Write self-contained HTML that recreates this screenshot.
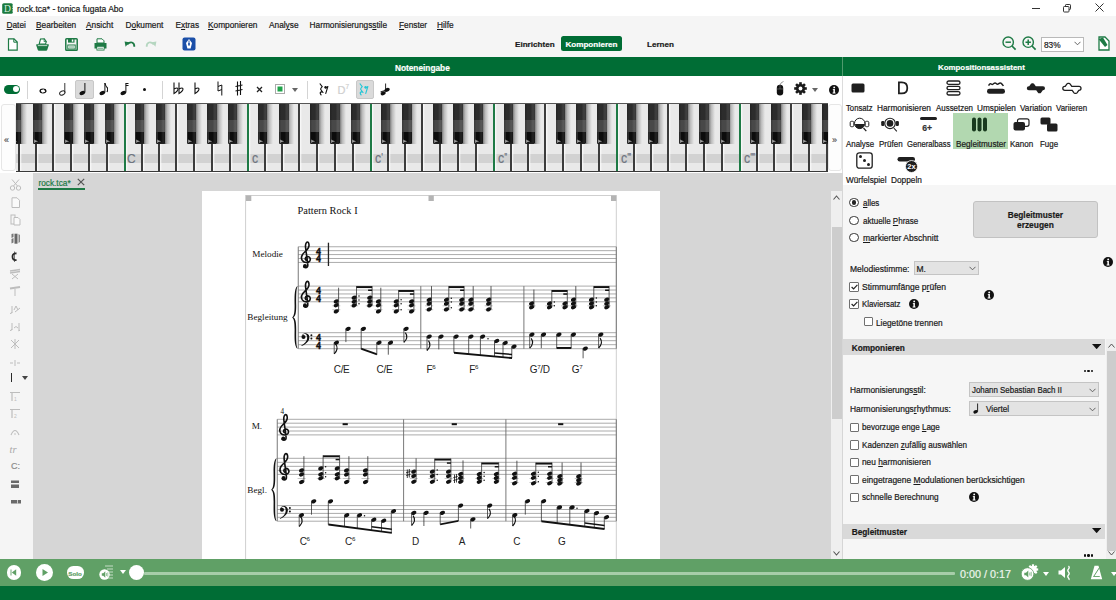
<!DOCTYPE html><html><head><meta charset="utf-8"><style>html,body{margin:0;padding:0}body{width:1116px;height:600px;position:relative;overflow:hidden;background:#fff;font-family:"Liberation Sans",sans-serif}.t{position:absolute;white-space:nowrap;-webkit-text-stroke:0.2px currentColor}u{text-decoration:underline;text-underline-offset:1px;text-decoration-thickness:0.5px}</style></head><body><div style="position:absolute;left:0px;top:0px;width:1116px;height:16px;background:#fff"></div>
<div style="position:absolute;left:0px;top:16px;width:1116px;height:41px;background:#f5f5f5"></div>
<div style="position:absolute;left:0px;top:57px;width:1116px;height:19px;background:#006d35"></div>
<div style="position:absolute;left:842px;top:57px;width:1px;height:19px;background:#4f9a6d"></div>
<div style="position:absolute;left:0px;top:76px;width:842px;height:27px;background:#fff"></div>
<div style="position:absolute;left:842px;top:76px;width:1px;height:483px;background:#dcdcdc"></div>
<div style="position:absolute;left:843px;top:76px;width:273px;height:109px;background:#fff"></div>
<div style="position:absolute;left:843px;top:185px;width:273px;height:374px;background:#f6f6f6"></div>
<div style="position:absolute;left:0px;top:103px;width:842px;height:70px;background:#fff"></div>
<div style="position:absolute;left:0px;top:173px;width:33px;height:386px;background:#f5f5f5"></div>
<div style="position:absolute;left:33px;top:173px;width:798px;height:386px;background:#d6d6d6"></div>
<div style="position:absolute;left:831px;top:173px;width:12px;height:386px;background:#d6d6d6"></div>
<div style="position:absolute;left:0px;top:559px;width:1116px;height:27px;background:#60a066"></div>
<div style="position:absolute;left:0px;top:586px;width:1116px;height:14px;background:#006d35"></div>
<svg style="position:absolute;left:2px;top:2.5px" width="11" height="11" viewBox="0 0 11 11"><rect x="0.2" y="0.2" width="10.6" height="10.6" rx="1.6" fill="#1b7a3e"/><text x="2" y="9" font-family="Liberation Serif" font-size="9.5" fill="#d8eedc">D</text><path d="M10.8 2.5 v1 M10.8 5 v1 M10.8 7.5 v1" stroke="#fff" stroke-width="0.8"/></svg>
<div class="t" style="left:17px;top:5.00px;font-size:8.5px;line-height:8.5px;height:11.05px;color:#1a1a1a;font-weight:400;font-family:"Liberation Sans", sans-serif;">rock.tca* - tonica fugata Abo</div>
<div style="position:absolute;left:1032px;top:8px;width:8px;height:1px;background:#333"></div>
<svg style="position:absolute;left:1062px;top:3px" width="10" height="10" viewBox="0 0 10 10" fill="none" stroke="#333" stroke-width="1">
<rect x="1.5" y="3.5" width="5.5" height="5.5" rx="0.8"/><path d="M3.5 3.5 V2.2 Q3.5 1.5 4.2 1.5 H7.8 Q8.5 1.5 8.5 2.2 V5.8 Q8.5 6.5 7.8 6.5 H7"/></svg>
<svg style="position:absolute;left:1095px;top:3px" width="9" height="9" viewBox="0 0 9 9" stroke="#333" stroke-width="1"><path d="M0.5 0.5 L8.5 8.5 M8.5 0.5 L0.5 8.5"/></svg>
<div class="t" style="left:6.5px;top:20.87px;font-size:8.3px;line-height:8.3px;height:10.790000000000001px;color:#1a1a1a;font-weight:400;font-family:"Liberation Sans", sans-serif;"><u>D</u>atei</div>
<div class="t" style="left:36px;top:20.87px;font-size:8.3px;line-height:8.3px;height:10.790000000000001px;color:#1a1a1a;font-weight:400;font-family:"Liberation Sans", sans-serif;"><u>B</u>earbeiten</div>
<div class="t" style="left:86px;top:20.87px;font-size:8.3px;line-height:8.3px;height:10.790000000000001px;color:#1a1a1a;font-weight:400;font-family:"Liberation Sans", sans-serif;"><u>A</u>nsicht</div>
<div class="t" style="left:125.5px;top:20.87px;font-size:8.3px;line-height:8.3px;height:10.790000000000001px;color:#1a1a1a;font-weight:400;font-family:"Liberation Sans", sans-serif;">D<u>o</u>kument</div>
<div class="t" style="left:175.5px;top:20.87px;font-size:8.3px;line-height:8.3px;height:10.790000000000001px;color:#1a1a1a;font-weight:400;font-family:"Liberation Sans", sans-serif;">E<u>x</u>tras</div>
<div class="t" style="left:208px;top:20.87px;font-size:8.3px;line-height:8.3px;height:10.790000000000001px;color:#1a1a1a;font-weight:400;font-family:"Liberation Sans", sans-serif;"><u>K</u>omponieren</div>
<div class="t" style="left:269px;top:20.87px;font-size:8.3px;line-height:8.3px;height:10.790000000000001px;color:#1a1a1a;font-weight:400;font-family:"Liberation Sans", sans-serif;">Anal<u>y</u>se</div>
<div class="t" style="left:309.6px;top:20.87px;font-size:8.3px;line-height:8.3px;height:10.790000000000001px;color:#1a1a1a;font-weight:400;font-family:"Liberation Sans", sans-serif;">Harmonisierungs<u>s</u>tile</div>
<div class="t" style="left:399px;top:20.87px;font-size:8.3px;line-height:8.3px;height:10.790000000000001px;color:#1a1a1a;font-weight:400;font-family:"Liberation Sans", sans-serif;"><u>F</u>enster</div>
<div class="t" style="left:437px;top:20.87px;font-size:8.3px;line-height:8.3px;height:10.790000000000001px;color:#1a1a1a;font-weight:400;font-family:"Liberation Sans", sans-serif;"><u>H</u>ilfe</div>
<svg style="position:absolute;left:7px;top:38px" width="13" height="13" viewBox="0 0 13 13"><path d="M1.5 0.8 H7 L10.2 4 V12.2 H1.5 Z" fill="#fff" stroke="#1e7a45" stroke-width="1.2"/><path d="M6.8 0.8 V4.2 H10.2" fill="none" stroke="#1e7a45" stroke-width="1"/></svg>
<svg style="position:absolute;left:36px;top:37.5px" width="13" height="13" viewBox="0 0 13 13"><path d="M3.2 6 L4.5 1 L8.3 0.8 L10.3 3.5 L9.6 6 Z" fill="#fff" stroke="#1e7a45" stroke-width="1.1"/><path d="M8.3 0.8 L8 3.6 L10.3 3.5" fill="none" stroke="#1e7a45" stroke-width="0.8"/><path d="M0.3 6.2 H12.7 V7.6 L11.2 12 Q10.9 12.7 10.2 12.7 H2.8 Q2.1 12.7 1.8 12 L0.3 7.6 Z" fill="#1e7a45"/><path d="M1.8 7.6 H11.2" stroke="#fff" stroke-width="0.7"/></svg>
<svg style="position:absolute;left:65px;top:38px" width="13" height="13" viewBox="0 0 13 13"><rect x="0.8" y="0.8" width="11.4" height="11.4" rx="0.8" fill="none" stroke="#1e7a45" stroke-width="1.5"/><rect x="3" y="0.8" width="6.5" height="3.8" fill="#1e7a45"/><rect x="6.8" y="1.5" width="1.5" height="2.2" fill="#fff"/><rect x="2.8" y="7" width="7.4" height="4" fill="#fff" stroke="#1e7a45" stroke-width="1"/><path d="M4 9 H9" stroke="#1e7a45" stroke-width="0.7"/></svg>
<svg style="position:absolute;left:94px;top:38px" width="13" height="13" viewBox="0 0 13 13"><path d="M3 0.8 H8 L10 2.8 V5 H3 Z" fill="#fff" stroke="#1e7a45" stroke-width="1"/><path d="M0.5 5 H12.5 V10.5 H10.5 V12.4 H2.5 V10.5 H0.5 Z" fill="#1e7a45"/><rect x="3.3" y="8.8" width="6.4" height="2.8" fill="#fff"/><rect x="4" y="9.8" width="5" height="0.7" fill="#1e7a45"/></svg>
<svg style="position:absolute;left:124px;top:40px" width="12" height="9" viewBox="0 0 12 9"><path d="M3.2 4.5 Q5.5 1.8 8 2.5 Q10.5 3.3 10.3 6.8" fill="none" stroke="#1e7a45" stroke-width="1.8"/><path d="M0.6 1.5 L5.2 2.2 L1.6 6.8 Z" fill="#1e7a45"/></svg>
<svg style="position:absolute;left:145px;top:40px" width="12" height="9" viewBox="0 0 12 9"><path d="M8.8 4.5 Q6.5 1.8 4 2.5 Q1.5 3.3 1.7 6.8" fill="none" stroke="#b5d6c0" stroke-width="1.8"/><path d="M11.4 1.5 L6.8 2.2 L10.4 6.8 Z" fill="#b5d6c0"/></svg>
<svg style="position:absolute;left:182px;top:37px" width="14" height="14" viewBox="0 0 14 14"><rect x="0.5" y="0.5" width="13" height="13" rx="2" fill="#1b4fa8"/><path d="M7 2 L10 6 L8.6 11.5 H5.4 L4 6 Z" fill="#fff"/><path d="M7 3.5 V9" stroke="#1b4fa8" stroke-width="0.9"/><circle cx="7" cy="7" r="1" fill="#1b4fa8"/></svg>
<div class="t" style="left:515px;top:41.04px;font-size:8.1px;line-height:8.1px;height:10.53px;color:#1a1a1a;font-weight:700;font-family:"Liberation Sans", sans-serif;">Einrichten</div>
<div style="position:absolute;left:561.3px;top:36.3px;width:61px;height:14.3px;background:#006d35;border-radius:2.5px"></div>
<div class="t" style="left:565.4px;top:41.04px;font-size:8.1px;line-height:8.1px;height:10.53px;color:#fff;font-weight:700;font-family:"Liberation Sans", sans-serif;">Komponieren</div>
<div class="t" style="left:647px;top:41.04px;font-size:8.1px;line-height:8.1px;height:10.53px;color:#1a1a1a;font-weight:700;font-family:"Liberation Sans", sans-serif;">Lernen</div>
<svg style="position:absolute;left:1002px;top:36px" width="15" height="15" viewBox="0 0 15 15"><circle cx="6.2" cy="6.2" r="5.2" fill="none" stroke="#1e7a45" stroke-width="1.4"/><path d="M3.5 6.2 H8.9" stroke="#1e7a45" stroke-width="1.5"/><path d="M10 10 L13.6 13.6" stroke="#1e7a45" stroke-width="1.7"/></svg>
<svg style="position:absolute;left:1022px;top:36px" width="15" height="15" viewBox="0 0 15 15"><circle cx="6.2" cy="6.2" r="5.2" fill="none" stroke="#1e7a45" stroke-width="1.4"/><path d="M3.5 6.2 H8.9 M6.2 3.5 V8.9" stroke="#1e7a45" stroke-width="1.5"/><path d="M10 10 L13.6 13.6" stroke="#1e7a45" stroke-width="1.7"/></svg>
<div style="position:absolute;left:1040.8px;top:36.7px;width:41.5px;height:13.5px;background:#fff;border:1px solid #b9b9b9"></div>
<div class="t" style="left:1044px;top:40.87px;font-size:8.3px;line-height:8.3px;height:10.790000000000001px;color:#222;font-weight:400;font-family:"Liberation Sans", sans-serif;">83%</div>
<svg style="position:absolute;left:1074px;top:41px" width="7" height="5" viewBox="0 0 7 5"><path d="M0.5 0.8 L3.5 3.8 L6.5 0.8" fill="none" stroke="#555" stroke-width="0.9"/></svg>
<svg style="position:absolute;left:1097px;top:36px" width="13" height="15" viewBox="0 0 13 15"><path d="M2 1 H8 L12 5 V14 H2 Z" fill="#fff" stroke="#1e7a45" stroke-width="1.3"/><path d="M1.5 3 L6 1.5 L10.5 9 L8 11 Z" fill="#1e7a45"/></svg>
<div class="t" style="left:394.9px;top:63.87px;font-size:8.3px;line-height:8.3px;height:10.790000000000001px;color:#fff;font-weight:700;font-family:"Liberation Sans", sans-serif;">Noteneingabe</div>
<div class="t" style="left:938px;top:64.21px;font-size:7.9px;line-height:7.9px;height:10.270000000000001px;color:#fff;font-weight:700;font-family:"Liberation Sans", sans-serif;">Kompositionsassistent</div>
<div style="position:absolute;left:16px;top:103px;width:812px;height:69px;overflow:hidden;background:#e9e9e9">
<div style="position:absolute;left:0;top:51px;width:812px;height:9px;background:#d2d2d2"></div>
<div style="position:absolute;left:-13.34px;top:0;width:2.2px;height:69px;background:linear-gradient(90deg,#fcfcfc,rgba(250,250,250,0))"></div><div style="position:absolute;left:-15.34px;top:0px;width:1.9px;height:69px;background:#1e7a45;border-radius:0 0 1px 1px"></div><div style="position:absolute;left:3.96px;top:0;width:2.2px;height:69px;background:linear-gradient(90deg,#fcfcfc,rgba(250,250,250,0))"></div><div style="position:absolute;left:1.96px;top:41px;width:1.9px;height:28px;background:#3c3c3c;border-radius:0 0 1px 1px"></div><div style="position:absolute;left:21.06px;top:0;width:2.2px;height:69px;background:linear-gradient(90deg,#fcfcfc,rgba(250,250,250,0))"></div><div style="position:absolute;left:19.06px;top:41px;width:1.9px;height:28px;background:#3c3c3c;border-radius:0 0 1px 1px"></div><div style="position:absolute;left:37.96px;top:0;width:2.2px;height:69px;background:linear-gradient(90deg,#fcfcfc,rgba(250,250,250,0))"></div><div style="position:absolute;left:35.96px;top:0px;width:1.9px;height:69px;background:#3c3c3c;border-radius:0 0 1px 1px"></div><div style="position:absolute;left:55.76px;top:0;width:2.2px;height:69px;background:linear-gradient(90deg,#fcfcfc,rgba(250,250,250,0))"></div><div style="position:absolute;left:53.76px;top:41px;width:1.9px;height:28px;background:#3c3c3c;border-radius:0 0 1px 1px"></div><div style="position:absolute;left:73.96px;top:0;width:2.2px;height:69px;background:linear-gradient(90deg,#fcfcfc,rgba(250,250,250,0))"></div><div style="position:absolute;left:71.96px;top:41px;width:1.9px;height:28px;background:#3c3c3c;border-radius:0 0 1px 1px"></div><div style="position:absolute;left:91.66px;top:0;width:2.2px;height:69px;background:linear-gradient(90deg,#fcfcfc,rgba(250,250,250,0))"></div><div style="position:absolute;left:89.66px;top:41px;width:1.9px;height:28px;background:#3c3c3c;border-radius:0 0 1px 1px"></div><div style="position:absolute;left:109.70px;top:0;width:2.2px;height:69px;background:linear-gradient(90deg,#fcfcfc,rgba(250,250,250,0))"></div><div style="position:absolute;left:107.70px;top:0px;width:1.9px;height:69px;background:#1e7a45;border-radius:0 0 1px 1px"></div><div style="position:absolute;left:127.00px;top:0;width:2.2px;height:69px;background:linear-gradient(90deg,#fcfcfc,rgba(250,250,250,0))"></div><div style="position:absolute;left:125.00px;top:41px;width:1.9px;height:28px;background:#3c3c3c;border-radius:0 0 1px 1px"></div><div style="position:absolute;left:144.10px;top:0;width:2.2px;height:69px;background:linear-gradient(90deg,#fcfcfc,rgba(250,250,250,0))"></div><div style="position:absolute;left:142.10px;top:41px;width:1.9px;height:28px;background:#3c3c3c;border-radius:0 0 1px 1px"></div><div style="position:absolute;left:161.00px;top:0;width:2.2px;height:69px;background:linear-gradient(90deg,#fcfcfc,rgba(250,250,250,0))"></div><div style="position:absolute;left:159.00px;top:0px;width:1.9px;height:69px;background:#3c3c3c;border-radius:0 0 1px 1px"></div><div style="position:absolute;left:178.80px;top:0;width:2.2px;height:69px;background:linear-gradient(90deg,#fcfcfc,rgba(250,250,250,0))"></div><div style="position:absolute;left:176.80px;top:41px;width:1.9px;height:28px;background:#3c3c3c;border-radius:0 0 1px 1px"></div><div style="position:absolute;left:197.00px;top:0;width:2.2px;height:69px;background:linear-gradient(90deg,#fcfcfc,rgba(250,250,250,0))"></div><div style="position:absolute;left:195.00px;top:41px;width:1.9px;height:28px;background:#3c3c3c;border-radius:0 0 1px 1px"></div><div style="position:absolute;left:214.70px;top:0;width:2.2px;height:69px;background:linear-gradient(90deg,#fcfcfc,rgba(250,250,250,0))"></div><div style="position:absolute;left:212.70px;top:41px;width:1.9px;height:28px;background:#3c3c3c;border-radius:0 0 1px 1px"></div><div style="position:absolute;left:232.74px;top:0;width:2.2px;height:69px;background:linear-gradient(90deg,#fcfcfc,rgba(250,250,250,0))"></div><div style="position:absolute;left:230.74px;top:0px;width:1.9px;height:69px;background:#1e7a45;border-radius:0 0 1px 1px"></div><div style="position:absolute;left:250.04px;top:0;width:2.2px;height:69px;background:linear-gradient(90deg,#fcfcfc,rgba(250,250,250,0))"></div><div style="position:absolute;left:248.04px;top:41px;width:1.9px;height:28px;background:#3c3c3c;border-radius:0 0 1px 1px"></div><div style="position:absolute;left:267.14px;top:0;width:2.2px;height:69px;background:linear-gradient(90deg,#fcfcfc,rgba(250,250,250,0))"></div><div style="position:absolute;left:265.14px;top:41px;width:1.9px;height:28px;background:#3c3c3c;border-radius:0 0 1px 1px"></div><div style="position:absolute;left:284.04px;top:0;width:2.2px;height:69px;background:linear-gradient(90deg,#fcfcfc,rgba(250,250,250,0))"></div><div style="position:absolute;left:282.04px;top:0px;width:1.9px;height:69px;background:#3c3c3c;border-radius:0 0 1px 1px"></div><div style="position:absolute;left:301.84px;top:0;width:2.2px;height:69px;background:linear-gradient(90deg,#fcfcfc,rgba(250,250,250,0))"></div><div style="position:absolute;left:299.84px;top:41px;width:1.9px;height:28px;background:#3c3c3c;border-radius:0 0 1px 1px"></div><div style="position:absolute;left:320.04px;top:0;width:2.2px;height:69px;background:linear-gradient(90deg,#fcfcfc,rgba(250,250,250,0))"></div><div style="position:absolute;left:318.04px;top:41px;width:1.9px;height:28px;background:#3c3c3c;border-radius:0 0 1px 1px"></div><div style="position:absolute;left:337.74px;top:0;width:2.2px;height:69px;background:linear-gradient(90deg,#fcfcfc,rgba(250,250,250,0))"></div><div style="position:absolute;left:335.74px;top:41px;width:1.9px;height:28px;background:#3c3c3c;border-radius:0 0 1px 1px"></div><div style="position:absolute;left:355.78px;top:0;width:2.2px;height:69px;background:linear-gradient(90deg,#fcfcfc,rgba(250,250,250,0))"></div><div style="position:absolute;left:353.78px;top:0px;width:1.9px;height:69px;background:#1e7a45;border-radius:0 0 1px 1px"></div><div style="position:absolute;left:373.08px;top:0;width:2.2px;height:69px;background:linear-gradient(90deg,#fcfcfc,rgba(250,250,250,0))"></div><div style="position:absolute;left:371.08px;top:41px;width:1.9px;height:28px;background:#3c3c3c;border-radius:0 0 1px 1px"></div><div style="position:absolute;left:390.18px;top:0;width:2.2px;height:69px;background:linear-gradient(90deg,#fcfcfc,rgba(250,250,250,0))"></div><div style="position:absolute;left:388.18px;top:41px;width:1.9px;height:28px;background:#3c3c3c;border-radius:0 0 1px 1px"></div><div style="position:absolute;left:407.08px;top:0;width:2.2px;height:69px;background:linear-gradient(90deg,#fcfcfc,rgba(250,250,250,0))"></div><div style="position:absolute;left:405.08px;top:0px;width:1.9px;height:69px;background:#3c3c3c;border-radius:0 0 1px 1px"></div><div style="position:absolute;left:424.88px;top:0;width:2.2px;height:69px;background:linear-gradient(90deg,#fcfcfc,rgba(250,250,250,0))"></div><div style="position:absolute;left:422.88px;top:41px;width:1.9px;height:28px;background:#3c3c3c;border-radius:0 0 1px 1px"></div><div style="position:absolute;left:443.08px;top:0;width:2.2px;height:69px;background:linear-gradient(90deg,#fcfcfc,rgba(250,250,250,0))"></div><div style="position:absolute;left:441.08px;top:41px;width:1.9px;height:28px;background:#3c3c3c;border-radius:0 0 1px 1px"></div><div style="position:absolute;left:460.78px;top:0;width:2.2px;height:69px;background:linear-gradient(90deg,#fcfcfc,rgba(250,250,250,0))"></div><div style="position:absolute;left:458.78px;top:41px;width:1.9px;height:28px;background:#3c3c3c;border-radius:0 0 1px 1px"></div><div style="position:absolute;left:478.82px;top:0;width:2.2px;height:69px;background:linear-gradient(90deg,#fcfcfc,rgba(250,250,250,0))"></div><div style="position:absolute;left:476.82px;top:0px;width:1.9px;height:69px;background:#1e7a45;border-radius:0 0 1px 1px"></div><div style="position:absolute;left:496.12px;top:0;width:2.2px;height:69px;background:linear-gradient(90deg,#fcfcfc,rgba(250,250,250,0))"></div><div style="position:absolute;left:494.12px;top:41px;width:1.9px;height:28px;background:#3c3c3c;border-radius:0 0 1px 1px"></div><div style="position:absolute;left:513.22px;top:0;width:2.2px;height:69px;background:linear-gradient(90deg,#fcfcfc,rgba(250,250,250,0))"></div><div style="position:absolute;left:511.22px;top:41px;width:1.9px;height:28px;background:#3c3c3c;border-radius:0 0 1px 1px"></div><div style="position:absolute;left:530.12px;top:0;width:2.2px;height:69px;background:linear-gradient(90deg,#fcfcfc,rgba(250,250,250,0))"></div><div style="position:absolute;left:528.12px;top:0px;width:1.9px;height:69px;background:#3c3c3c;border-radius:0 0 1px 1px"></div><div style="position:absolute;left:547.92px;top:0;width:2.2px;height:69px;background:linear-gradient(90deg,#fcfcfc,rgba(250,250,250,0))"></div><div style="position:absolute;left:545.92px;top:41px;width:1.9px;height:28px;background:#3c3c3c;border-radius:0 0 1px 1px"></div><div style="position:absolute;left:566.12px;top:0;width:2.2px;height:69px;background:linear-gradient(90deg,#fcfcfc,rgba(250,250,250,0))"></div><div style="position:absolute;left:564.12px;top:41px;width:1.9px;height:28px;background:#3c3c3c;border-radius:0 0 1px 1px"></div><div style="position:absolute;left:583.82px;top:0;width:2.2px;height:69px;background:linear-gradient(90deg,#fcfcfc,rgba(250,250,250,0))"></div><div style="position:absolute;left:581.82px;top:41px;width:1.9px;height:28px;background:#3c3c3c;border-radius:0 0 1px 1px"></div><div style="position:absolute;left:601.86px;top:0;width:2.2px;height:69px;background:linear-gradient(90deg,#fcfcfc,rgba(250,250,250,0))"></div><div style="position:absolute;left:599.86px;top:0px;width:1.9px;height:69px;background:#1e7a45;border-radius:0 0 1px 1px"></div><div style="position:absolute;left:619.16px;top:0;width:2.2px;height:69px;background:linear-gradient(90deg,#fcfcfc,rgba(250,250,250,0))"></div><div style="position:absolute;left:617.16px;top:41px;width:1.9px;height:28px;background:#3c3c3c;border-radius:0 0 1px 1px"></div><div style="position:absolute;left:636.26px;top:0;width:2.2px;height:69px;background:linear-gradient(90deg,#fcfcfc,rgba(250,250,250,0))"></div><div style="position:absolute;left:634.26px;top:41px;width:1.9px;height:28px;background:#3c3c3c;border-radius:0 0 1px 1px"></div><div style="position:absolute;left:653.16px;top:0;width:2.2px;height:69px;background:linear-gradient(90deg,#fcfcfc,rgba(250,250,250,0))"></div><div style="position:absolute;left:651.16px;top:0px;width:1.9px;height:69px;background:#3c3c3c;border-radius:0 0 1px 1px"></div><div style="position:absolute;left:670.96px;top:0;width:2.2px;height:69px;background:linear-gradient(90deg,#fcfcfc,rgba(250,250,250,0))"></div><div style="position:absolute;left:668.96px;top:41px;width:1.9px;height:28px;background:#3c3c3c;border-radius:0 0 1px 1px"></div><div style="position:absolute;left:689.16px;top:0;width:2.2px;height:69px;background:linear-gradient(90deg,#fcfcfc,rgba(250,250,250,0))"></div><div style="position:absolute;left:687.16px;top:41px;width:1.9px;height:28px;background:#3c3c3c;border-radius:0 0 1px 1px"></div><div style="position:absolute;left:706.86px;top:0;width:2.2px;height:69px;background:linear-gradient(90deg,#fcfcfc,rgba(250,250,250,0))"></div><div style="position:absolute;left:704.86px;top:41px;width:1.9px;height:28px;background:#3c3c3c;border-radius:0 0 1px 1px"></div><div style="position:absolute;left:724.90px;top:0;width:2.2px;height:69px;background:linear-gradient(90deg,#fcfcfc,rgba(250,250,250,0))"></div><div style="position:absolute;left:722.90px;top:0px;width:1.9px;height:69px;background:#1e7a45;border-radius:0 0 1px 1px"></div><div style="position:absolute;left:742.20px;top:0;width:2.2px;height:69px;background:linear-gradient(90deg,#fcfcfc,rgba(250,250,250,0))"></div><div style="position:absolute;left:740.20px;top:41px;width:1.9px;height:28px;background:#3c3c3c;border-radius:0 0 1px 1px"></div><div style="position:absolute;left:759.30px;top:0;width:2.2px;height:69px;background:linear-gradient(90deg,#fcfcfc,rgba(250,250,250,0))"></div><div style="position:absolute;left:757.30px;top:41px;width:1.9px;height:28px;background:#3c3c3c;border-radius:0 0 1px 1px"></div><div style="position:absolute;left:776.20px;top:0;width:2.2px;height:69px;background:linear-gradient(90deg,#fcfcfc,rgba(250,250,250,0))"></div><div style="position:absolute;left:774.20px;top:0px;width:1.9px;height:69px;background:#3c3c3c;border-radius:0 0 1px 1px"></div><div style="position:absolute;left:794.00px;top:0;width:2.2px;height:69px;background:linear-gradient(90deg,#fcfcfc,rgba(250,250,250,0))"></div><div style="position:absolute;left:792.00px;top:41px;width:1.9px;height:28px;background:#3c3c3c;border-radius:0 0 1px 1px"></div><div style="position:absolute;left:812.20px;top:0;width:2.2px;height:69px;background:linear-gradient(90deg,#fcfcfc,rgba(250,250,250,0))"></div><div style="position:absolute;left:810.20px;top:41px;width:1.9px;height:28px;background:#3c3c3c;border-radius:0 0 1px 1px"></div><div style="position:absolute;left:829.90px;top:0;width:2.2px;height:69px;background:linear-gradient(90deg,#fcfcfc,rgba(250,250,250,0))"></div><div style="position:absolute;left:827.90px;top:41px;width:1.9px;height:28px;background:#3c3c3c;border-radius:0 0 1px 1px"></div><div style="position:absolute;left:5.16px;top:0;width:6px;height:41px;background:linear-gradient(90deg,#7c7c7c,#b8b8b8 35%,rgba(233,233,233,0))"></div><div style="position:absolute;left:-4.34px;top:0;width:9.6px;height:41.3px;border-radius:0 0 1.5px 1.5px;background:linear-gradient(180deg,#2c2c2c 0,#2c2c2c 16.6px,#484848 16.6px,#484848 29.3px,#0c0c0c 29.3px)"></div><div style="position:absolute;left:-4.34px;top:0;width:9.6px;height:41.3px;border-radius:0 0 1.5px 1.5px;background:linear-gradient(90deg,rgba(0,0,0,0.2),rgba(0,0,0,0) 25%,rgba(255,255,255,0) 55%,rgba(255,255,255,0.1) 80%,rgba(255,255,255,0.04))"></div><div style="position:absolute;left:-4.14px;top:29.3px;width:1.6px;height:11px;background:rgba(255,255,255,0.13)"></div><svg style="position:absolute;left:-4.34px;top:35px" width="10" height="7" viewBox="0 0 10 7"><path d="M1.2 1.6 Q2.5 3 5.2 3.2 Q2.5 3.8 1.2 5 Z" fill="#c8c8c8" opacity="0.8"/><path d="M1.2 5.2 Q5 3.4 9.2 5.5 V6 H1.2 Z" fill="#222"/></svg><div style="position:absolute;left:26.36px;top:0;width:6px;height:41px;background:linear-gradient(90deg,#7c7c7c,#b8b8b8 35%,rgba(233,233,233,0))"></div><div style="position:absolute;left:16.86px;top:0;width:9.6px;height:41.3px;border-radius:0 0 1.5px 1.5px;background:linear-gradient(180deg,#2c2c2c 0,#2c2c2c 16.6px,#484848 16.6px,#484848 29.3px,#0c0c0c 29.3px)"></div><div style="position:absolute;left:16.86px;top:0;width:9.6px;height:41.3px;border-radius:0 0 1.5px 1.5px;background:linear-gradient(90deg,rgba(0,0,0,0.2),rgba(0,0,0,0) 25%,rgba(255,255,255,0) 55%,rgba(255,255,255,0.1) 80%,rgba(255,255,255,0.04))"></div><div style="position:absolute;left:17.06px;top:29.3px;width:1.6px;height:11px;background:rgba(255,255,255,0.13)"></div><svg style="position:absolute;left:16.86px;top:35px" width="10" height="7" viewBox="0 0 10 7"><path d="M1.2 1.6 Q2.5 3 5.2 3.2 Q2.5 3.8 1.2 5 Z" fill="#c8c8c8" opacity="0.8"/><path d="M1.2 5.2 Q5 3.4 9.2 5.5 V6 H1.2 Z" fill="#222"/></svg><div style="position:absolute;left:57.06px;top:0;width:6px;height:41px;background:linear-gradient(90deg,#7c7c7c,#b8b8b8 35%,rgba(233,233,233,0))"></div><div style="position:absolute;left:47.56px;top:0;width:9.6px;height:41.3px;border-radius:0 0 1.5px 1.5px;background:linear-gradient(180deg,#2c2c2c 0,#2c2c2c 16.6px,#484848 16.6px,#484848 29.3px,#0c0c0c 29.3px)"></div><div style="position:absolute;left:47.56px;top:0;width:9.6px;height:41.3px;border-radius:0 0 1.5px 1.5px;background:linear-gradient(90deg,rgba(0,0,0,0.2),rgba(0,0,0,0) 25%,rgba(255,255,255,0) 55%,rgba(255,255,255,0.1) 80%,rgba(255,255,255,0.04))"></div><div style="position:absolute;left:47.76px;top:29.3px;width:1.6px;height:11px;background:rgba(255,255,255,0.13)"></div><svg style="position:absolute;left:47.56px;top:35px" width="10" height="7" viewBox="0 0 10 7"><path d="M1.2 1.6 Q2.5 3 5.2 3.2 Q2.5 3.8 1.2 5 Z" fill="#c8c8c8" opacity="0.8"/><path d="M1.2 5.2 Q5 3.4 9.2 5.5 V6 H1.2 Z" fill="#222"/></svg><div style="position:absolute;left:77.46px;top:0;width:6px;height:41px;background:linear-gradient(90deg,#7c7c7c,#b8b8b8 35%,rgba(233,233,233,0))"></div><div style="position:absolute;left:67.96px;top:0;width:9.6px;height:41.3px;border-radius:0 0 1.5px 1.5px;background:linear-gradient(180deg,#2c2c2c 0,#2c2c2c 16.6px,#484848 16.6px,#484848 29.3px,#0c0c0c 29.3px)"></div><div style="position:absolute;left:67.96px;top:0;width:9.6px;height:41.3px;border-radius:0 0 1.5px 1.5px;background:linear-gradient(90deg,rgba(0,0,0,0.2),rgba(0,0,0,0) 25%,rgba(255,255,255,0) 55%,rgba(255,255,255,0.1) 80%,rgba(255,255,255,0.04))"></div><div style="position:absolute;left:68.16px;top:29.3px;width:1.6px;height:11px;background:rgba(255,255,255,0.13)"></div><svg style="position:absolute;left:67.96px;top:35px" width="10" height="7" viewBox="0 0 10 7"><path d="M1.2 1.6 Q2.5 3 5.2 3.2 Q2.5 3.8 1.2 5 Z" fill="#c8c8c8" opacity="0.8"/><path d="M1.2 5.2 Q5 3.4 9.2 5.5 V6 H1.2 Z" fill="#222"/></svg><div style="position:absolute;left:98.26px;top:0;width:6px;height:41px;background:linear-gradient(90deg,#7c7c7c,#b8b8b8 35%,rgba(233,233,233,0))"></div><div style="position:absolute;left:88.76px;top:0;width:9.6px;height:41.3px;border-radius:0 0 1.5px 1.5px;background:linear-gradient(180deg,#2c2c2c 0,#2c2c2c 16.6px,#484848 16.6px,#484848 29.3px,#0c0c0c 29.3px)"></div><div style="position:absolute;left:88.76px;top:0;width:9.6px;height:41.3px;border-radius:0 0 1.5px 1.5px;background:linear-gradient(90deg,rgba(0,0,0,0.2),rgba(0,0,0,0) 25%,rgba(255,255,255,0) 55%,rgba(255,255,255,0.1) 80%,rgba(255,255,255,0.04))"></div><div style="position:absolute;left:88.96px;top:29.3px;width:1.6px;height:11px;background:rgba(255,255,255,0.13)"></div><svg style="position:absolute;left:88.76px;top:35px" width="10" height="7" viewBox="0 0 10 7"><path d="M1.2 1.6 Q2.5 3 5.2 3.2 Q2.5 3.8 1.2 5 Z" fill="#c8c8c8" opacity="0.8"/><path d="M1.2 5.2 Q5 3.4 9.2 5.5 V6 H1.2 Z" fill="#222"/></svg><div style="position:absolute;left:128.20px;top:0;width:6px;height:41px;background:linear-gradient(90deg,#7c7c7c,#b8b8b8 35%,rgba(233,233,233,0))"></div><div style="position:absolute;left:118.70px;top:0;width:9.6px;height:41.3px;border-radius:0 0 1.5px 1.5px;background:linear-gradient(180deg,#2c2c2c 0,#2c2c2c 16.6px,#484848 16.6px,#484848 29.3px,#0c0c0c 29.3px)"></div><div style="position:absolute;left:118.70px;top:0;width:9.6px;height:41.3px;border-radius:0 0 1.5px 1.5px;background:linear-gradient(90deg,rgba(0,0,0,0.2),rgba(0,0,0,0) 25%,rgba(255,255,255,0) 55%,rgba(255,255,255,0.1) 80%,rgba(255,255,255,0.04))"></div><div style="position:absolute;left:118.90px;top:29.3px;width:1.6px;height:11px;background:rgba(255,255,255,0.13)"></div><svg style="position:absolute;left:118.70px;top:35px" width="10" height="7" viewBox="0 0 10 7"><path d="M1.2 1.6 Q2.5 3 5.2 3.2 Q2.5 3.8 1.2 5 Z" fill="#c8c8c8" opacity="0.8"/><path d="M1.2 5.2 Q5 3.4 9.2 5.5 V6 H1.2 Z" fill="#222"/></svg><div style="position:absolute;left:149.40px;top:0;width:6px;height:41px;background:linear-gradient(90deg,#7c7c7c,#b8b8b8 35%,rgba(233,233,233,0))"></div><div style="position:absolute;left:139.90px;top:0;width:9.6px;height:41.3px;border-radius:0 0 1.5px 1.5px;background:linear-gradient(180deg,#2c2c2c 0,#2c2c2c 16.6px,#484848 16.6px,#484848 29.3px,#0c0c0c 29.3px)"></div><div style="position:absolute;left:139.90px;top:0;width:9.6px;height:41.3px;border-radius:0 0 1.5px 1.5px;background:linear-gradient(90deg,rgba(0,0,0,0.2),rgba(0,0,0,0) 25%,rgba(255,255,255,0) 55%,rgba(255,255,255,0.1) 80%,rgba(255,255,255,0.04))"></div><div style="position:absolute;left:140.10px;top:29.3px;width:1.6px;height:11px;background:rgba(255,255,255,0.13)"></div><svg style="position:absolute;left:139.90px;top:35px" width="10" height="7" viewBox="0 0 10 7"><path d="M1.2 1.6 Q2.5 3 5.2 3.2 Q2.5 3.8 1.2 5 Z" fill="#c8c8c8" opacity="0.8"/><path d="M1.2 5.2 Q5 3.4 9.2 5.5 V6 H1.2 Z" fill="#222"/></svg><div style="position:absolute;left:180.10px;top:0;width:6px;height:41px;background:linear-gradient(90deg,#7c7c7c,#b8b8b8 35%,rgba(233,233,233,0))"></div><div style="position:absolute;left:170.60px;top:0;width:9.6px;height:41.3px;border-radius:0 0 1.5px 1.5px;background:linear-gradient(180deg,#2c2c2c 0,#2c2c2c 16.6px,#484848 16.6px,#484848 29.3px,#0c0c0c 29.3px)"></div><div style="position:absolute;left:170.60px;top:0;width:9.6px;height:41.3px;border-radius:0 0 1.5px 1.5px;background:linear-gradient(90deg,rgba(0,0,0,0.2),rgba(0,0,0,0) 25%,rgba(255,255,255,0) 55%,rgba(255,255,255,0.1) 80%,rgba(255,255,255,0.04))"></div><div style="position:absolute;left:170.80px;top:29.3px;width:1.6px;height:11px;background:rgba(255,255,255,0.13)"></div><svg style="position:absolute;left:170.60px;top:35px" width="10" height="7" viewBox="0 0 10 7"><path d="M1.2 1.6 Q2.5 3 5.2 3.2 Q2.5 3.8 1.2 5 Z" fill="#c8c8c8" opacity="0.8"/><path d="M1.2 5.2 Q5 3.4 9.2 5.5 V6 H1.2 Z" fill="#222"/></svg><div style="position:absolute;left:200.50px;top:0;width:6px;height:41px;background:linear-gradient(90deg,#7c7c7c,#b8b8b8 35%,rgba(233,233,233,0))"></div><div style="position:absolute;left:191.00px;top:0;width:9.6px;height:41.3px;border-radius:0 0 1.5px 1.5px;background:linear-gradient(180deg,#2c2c2c 0,#2c2c2c 16.6px,#484848 16.6px,#484848 29.3px,#0c0c0c 29.3px)"></div><div style="position:absolute;left:191.00px;top:0;width:9.6px;height:41.3px;border-radius:0 0 1.5px 1.5px;background:linear-gradient(90deg,rgba(0,0,0,0.2),rgba(0,0,0,0) 25%,rgba(255,255,255,0) 55%,rgba(255,255,255,0.1) 80%,rgba(255,255,255,0.04))"></div><div style="position:absolute;left:191.20px;top:29.3px;width:1.6px;height:11px;background:rgba(255,255,255,0.13)"></div><svg style="position:absolute;left:191.00px;top:35px" width="10" height="7" viewBox="0 0 10 7"><path d="M1.2 1.6 Q2.5 3 5.2 3.2 Q2.5 3.8 1.2 5 Z" fill="#c8c8c8" opacity="0.8"/><path d="M1.2 5.2 Q5 3.4 9.2 5.5 V6 H1.2 Z" fill="#222"/></svg><div style="position:absolute;left:221.30px;top:0;width:6px;height:41px;background:linear-gradient(90deg,#7c7c7c,#b8b8b8 35%,rgba(233,233,233,0))"></div><div style="position:absolute;left:211.80px;top:0;width:9.6px;height:41.3px;border-radius:0 0 1.5px 1.5px;background:linear-gradient(180deg,#2c2c2c 0,#2c2c2c 16.6px,#484848 16.6px,#484848 29.3px,#0c0c0c 29.3px)"></div><div style="position:absolute;left:211.80px;top:0;width:9.6px;height:41.3px;border-radius:0 0 1.5px 1.5px;background:linear-gradient(90deg,rgba(0,0,0,0.2),rgba(0,0,0,0) 25%,rgba(255,255,255,0) 55%,rgba(255,255,255,0.1) 80%,rgba(255,255,255,0.04))"></div><div style="position:absolute;left:212.00px;top:29.3px;width:1.6px;height:11px;background:rgba(255,255,255,0.13)"></div><svg style="position:absolute;left:211.80px;top:35px" width="10" height="7" viewBox="0 0 10 7"><path d="M1.2 1.6 Q2.5 3 5.2 3.2 Q2.5 3.8 1.2 5 Z" fill="#c8c8c8" opacity="0.8"/><path d="M1.2 5.2 Q5 3.4 9.2 5.5 V6 H1.2 Z" fill="#222"/></svg><div style="position:absolute;left:251.24px;top:0;width:6px;height:41px;background:linear-gradient(90deg,#7c7c7c,#b8b8b8 35%,rgba(233,233,233,0))"></div><div style="position:absolute;left:241.74px;top:0;width:9.6px;height:41.3px;border-radius:0 0 1.5px 1.5px;background:linear-gradient(180deg,#2c2c2c 0,#2c2c2c 16.6px,#484848 16.6px,#484848 29.3px,#0c0c0c 29.3px)"></div><div style="position:absolute;left:241.74px;top:0;width:9.6px;height:41.3px;border-radius:0 0 1.5px 1.5px;background:linear-gradient(90deg,rgba(0,0,0,0.2),rgba(0,0,0,0) 25%,rgba(255,255,255,0) 55%,rgba(255,255,255,0.1) 80%,rgba(255,255,255,0.04))"></div><div style="position:absolute;left:241.94px;top:29.3px;width:1.6px;height:11px;background:rgba(255,255,255,0.13)"></div><svg style="position:absolute;left:241.74px;top:35px" width="10" height="7" viewBox="0 0 10 7"><path d="M1.2 1.6 Q2.5 3 5.2 3.2 Q2.5 3.8 1.2 5 Z" fill="#c8c8c8" opacity="0.8"/><path d="M1.2 5.2 Q5 3.4 9.2 5.5 V6 H1.2 Z" fill="#222"/></svg><div style="position:absolute;left:272.44px;top:0;width:6px;height:41px;background:linear-gradient(90deg,#7c7c7c,#b8b8b8 35%,rgba(233,233,233,0))"></div><div style="position:absolute;left:262.94px;top:0;width:9.6px;height:41.3px;border-radius:0 0 1.5px 1.5px;background:linear-gradient(180deg,#2c2c2c 0,#2c2c2c 16.6px,#484848 16.6px,#484848 29.3px,#0c0c0c 29.3px)"></div><div style="position:absolute;left:262.94px;top:0;width:9.6px;height:41.3px;border-radius:0 0 1.5px 1.5px;background:linear-gradient(90deg,rgba(0,0,0,0.2),rgba(0,0,0,0) 25%,rgba(255,255,255,0) 55%,rgba(255,255,255,0.1) 80%,rgba(255,255,255,0.04))"></div><div style="position:absolute;left:263.14px;top:29.3px;width:1.6px;height:11px;background:rgba(255,255,255,0.13)"></div><svg style="position:absolute;left:262.94px;top:35px" width="10" height="7" viewBox="0 0 10 7"><path d="M1.2 1.6 Q2.5 3 5.2 3.2 Q2.5 3.8 1.2 5 Z" fill="#c8c8c8" opacity="0.8"/><path d="M1.2 5.2 Q5 3.4 9.2 5.5 V6 H1.2 Z" fill="#222"/></svg><div style="position:absolute;left:303.14px;top:0;width:6px;height:41px;background:linear-gradient(90deg,#7c7c7c,#b8b8b8 35%,rgba(233,233,233,0))"></div><div style="position:absolute;left:293.64px;top:0;width:9.6px;height:41.3px;border-radius:0 0 1.5px 1.5px;background:linear-gradient(180deg,#2c2c2c 0,#2c2c2c 16.6px,#484848 16.6px,#484848 29.3px,#0c0c0c 29.3px)"></div><div style="position:absolute;left:293.64px;top:0;width:9.6px;height:41.3px;border-radius:0 0 1.5px 1.5px;background:linear-gradient(90deg,rgba(0,0,0,0.2),rgba(0,0,0,0) 25%,rgba(255,255,255,0) 55%,rgba(255,255,255,0.1) 80%,rgba(255,255,255,0.04))"></div><div style="position:absolute;left:293.84px;top:29.3px;width:1.6px;height:11px;background:rgba(255,255,255,0.13)"></div><svg style="position:absolute;left:293.64px;top:35px" width="10" height="7" viewBox="0 0 10 7"><path d="M1.2 1.6 Q2.5 3 5.2 3.2 Q2.5 3.8 1.2 5 Z" fill="#c8c8c8" opacity="0.8"/><path d="M1.2 5.2 Q5 3.4 9.2 5.5 V6 H1.2 Z" fill="#222"/></svg><div style="position:absolute;left:323.54px;top:0;width:6px;height:41px;background:linear-gradient(90deg,#7c7c7c,#b8b8b8 35%,rgba(233,233,233,0))"></div><div style="position:absolute;left:314.04px;top:0;width:9.6px;height:41.3px;border-radius:0 0 1.5px 1.5px;background:linear-gradient(180deg,#2c2c2c 0,#2c2c2c 16.6px,#484848 16.6px,#484848 29.3px,#0c0c0c 29.3px)"></div><div style="position:absolute;left:314.04px;top:0;width:9.6px;height:41.3px;border-radius:0 0 1.5px 1.5px;background:linear-gradient(90deg,rgba(0,0,0,0.2),rgba(0,0,0,0) 25%,rgba(255,255,255,0) 55%,rgba(255,255,255,0.1) 80%,rgba(255,255,255,0.04))"></div><div style="position:absolute;left:314.24px;top:29.3px;width:1.6px;height:11px;background:rgba(255,255,255,0.13)"></div><svg style="position:absolute;left:314.04px;top:35px" width="10" height="7" viewBox="0 0 10 7"><path d="M1.2 1.6 Q2.5 3 5.2 3.2 Q2.5 3.8 1.2 5 Z" fill="#c8c8c8" opacity="0.8"/><path d="M1.2 5.2 Q5 3.4 9.2 5.5 V6 H1.2 Z" fill="#222"/></svg><div style="position:absolute;left:344.34px;top:0;width:6px;height:41px;background:linear-gradient(90deg,#7c7c7c,#b8b8b8 35%,rgba(233,233,233,0))"></div><div style="position:absolute;left:334.84px;top:0;width:9.6px;height:41.3px;border-radius:0 0 1.5px 1.5px;background:linear-gradient(180deg,#2c2c2c 0,#2c2c2c 16.6px,#484848 16.6px,#484848 29.3px,#0c0c0c 29.3px)"></div><div style="position:absolute;left:334.84px;top:0;width:9.6px;height:41.3px;border-radius:0 0 1.5px 1.5px;background:linear-gradient(90deg,rgba(0,0,0,0.2),rgba(0,0,0,0) 25%,rgba(255,255,255,0) 55%,rgba(255,255,255,0.1) 80%,rgba(255,255,255,0.04))"></div><div style="position:absolute;left:335.04px;top:29.3px;width:1.6px;height:11px;background:rgba(255,255,255,0.13)"></div><svg style="position:absolute;left:334.84px;top:35px" width="10" height="7" viewBox="0 0 10 7"><path d="M1.2 1.6 Q2.5 3 5.2 3.2 Q2.5 3.8 1.2 5 Z" fill="#c8c8c8" opacity="0.8"/><path d="M1.2 5.2 Q5 3.4 9.2 5.5 V6 H1.2 Z" fill="#222"/></svg><div style="position:absolute;left:374.28px;top:0;width:6px;height:41px;background:linear-gradient(90deg,#7c7c7c,#b8b8b8 35%,rgba(233,233,233,0))"></div><div style="position:absolute;left:364.78px;top:0;width:9.6px;height:41.3px;border-radius:0 0 1.5px 1.5px;background:linear-gradient(180deg,#2c2c2c 0,#2c2c2c 16.6px,#484848 16.6px,#484848 29.3px,#0c0c0c 29.3px)"></div><div style="position:absolute;left:364.78px;top:0;width:9.6px;height:41.3px;border-radius:0 0 1.5px 1.5px;background:linear-gradient(90deg,rgba(0,0,0,0.2),rgba(0,0,0,0) 25%,rgba(255,255,255,0) 55%,rgba(255,255,255,0.1) 80%,rgba(255,255,255,0.04))"></div><div style="position:absolute;left:364.98px;top:29.3px;width:1.6px;height:11px;background:rgba(255,255,255,0.13)"></div><svg style="position:absolute;left:364.78px;top:35px" width="10" height="7" viewBox="0 0 10 7"><path d="M1.2 1.6 Q2.5 3 5.2 3.2 Q2.5 3.8 1.2 5 Z" fill="#c8c8c8" opacity="0.8"/><path d="M1.2 5.2 Q5 3.4 9.2 5.5 V6 H1.2 Z" fill="#222"/></svg><div style="position:absolute;left:395.48px;top:0;width:6px;height:41px;background:linear-gradient(90deg,#7c7c7c,#b8b8b8 35%,rgba(233,233,233,0))"></div><div style="position:absolute;left:385.98px;top:0;width:9.6px;height:41.3px;border-radius:0 0 1.5px 1.5px;background:linear-gradient(180deg,#2c2c2c 0,#2c2c2c 16.6px,#484848 16.6px,#484848 29.3px,#0c0c0c 29.3px)"></div><div style="position:absolute;left:385.98px;top:0;width:9.6px;height:41.3px;border-radius:0 0 1.5px 1.5px;background:linear-gradient(90deg,rgba(0,0,0,0.2),rgba(0,0,0,0) 25%,rgba(255,255,255,0) 55%,rgba(255,255,255,0.1) 80%,rgba(255,255,255,0.04))"></div><div style="position:absolute;left:386.18px;top:29.3px;width:1.6px;height:11px;background:rgba(255,255,255,0.13)"></div><svg style="position:absolute;left:385.98px;top:35px" width="10" height="7" viewBox="0 0 10 7"><path d="M1.2 1.6 Q2.5 3 5.2 3.2 Q2.5 3.8 1.2 5 Z" fill="#c8c8c8" opacity="0.8"/><path d="M1.2 5.2 Q5 3.4 9.2 5.5 V6 H1.2 Z" fill="#222"/></svg><div style="position:absolute;left:426.18px;top:0;width:6px;height:41px;background:linear-gradient(90deg,#7c7c7c,#b8b8b8 35%,rgba(233,233,233,0))"></div><div style="position:absolute;left:416.68px;top:0;width:9.6px;height:41.3px;border-radius:0 0 1.5px 1.5px;background:linear-gradient(180deg,#2c2c2c 0,#2c2c2c 16.6px,#484848 16.6px,#484848 29.3px,#0c0c0c 29.3px)"></div><div style="position:absolute;left:416.68px;top:0;width:9.6px;height:41.3px;border-radius:0 0 1.5px 1.5px;background:linear-gradient(90deg,rgba(0,0,0,0.2),rgba(0,0,0,0) 25%,rgba(255,255,255,0) 55%,rgba(255,255,255,0.1) 80%,rgba(255,255,255,0.04))"></div><div style="position:absolute;left:416.88px;top:29.3px;width:1.6px;height:11px;background:rgba(255,255,255,0.13)"></div><svg style="position:absolute;left:416.68px;top:35px" width="10" height="7" viewBox="0 0 10 7"><path d="M1.2 1.6 Q2.5 3 5.2 3.2 Q2.5 3.8 1.2 5 Z" fill="#c8c8c8" opacity="0.8"/><path d="M1.2 5.2 Q5 3.4 9.2 5.5 V6 H1.2 Z" fill="#222"/></svg><div style="position:absolute;left:446.58px;top:0;width:6px;height:41px;background:linear-gradient(90deg,#7c7c7c,#b8b8b8 35%,rgba(233,233,233,0))"></div><div style="position:absolute;left:437.08px;top:0;width:9.6px;height:41.3px;border-radius:0 0 1.5px 1.5px;background:linear-gradient(180deg,#2c2c2c 0,#2c2c2c 16.6px,#484848 16.6px,#484848 29.3px,#0c0c0c 29.3px)"></div><div style="position:absolute;left:437.08px;top:0;width:9.6px;height:41.3px;border-radius:0 0 1.5px 1.5px;background:linear-gradient(90deg,rgba(0,0,0,0.2),rgba(0,0,0,0) 25%,rgba(255,255,255,0) 55%,rgba(255,255,255,0.1) 80%,rgba(255,255,255,0.04))"></div><div style="position:absolute;left:437.28px;top:29.3px;width:1.6px;height:11px;background:rgba(255,255,255,0.13)"></div><svg style="position:absolute;left:437.08px;top:35px" width="10" height="7" viewBox="0 0 10 7"><path d="M1.2 1.6 Q2.5 3 5.2 3.2 Q2.5 3.8 1.2 5 Z" fill="#c8c8c8" opacity="0.8"/><path d="M1.2 5.2 Q5 3.4 9.2 5.5 V6 H1.2 Z" fill="#222"/></svg><div style="position:absolute;left:467.38px;top:0;width:6px;height:41px;background:linear-gradient(90deg,#7c7c7c,#b8b8b8 35%,rgba(233,233,233,0))"></div><div style="position:absolute;left:457.88px;top:0;width:9.6px;height:41.3px;border-radius:0 0 1.5px 1.5px;background:linear-gradient(180deg,#2c2c2c 0,#2c2c2c 16.6px,#484848 16.6px,#484848 29.3px,#0c0c0c 29.3px)"></div><div style="position:absolute;left:457.88px;top:0;width:9.6px;height:41.3px;border-radius:0 0 1.5px 1.5px;background:linear-gradient(90deg,rgba(0,0,0,0.2),rgba(0,0,0,0) 25%,rgba(255,255,255,0) 55%,rgba(255,255,255,0.1) 80%,rgba(255,255,255,0.04))"></div><div style="position:absolute;left:458.08px;top:29.3px;width:1.6px;height:11px;background:rgba(255,255,255,0.13)"></div><svg style="position:absolute;left:457.88px;top:35px" width="10" height="7" viewBox="0 0 10 7"><path d="M1.2 1.6 Q2.5 3 5.2 3.2 Q2.5 3.8 1.2 5 Z" fill="#c8c8c8" opacity="0.8"/><path d="M1.2 5.2 Q5 3.4 9.2 5.5 V6 H1.2 Z" fill="#222"/></svg><div style="position:absolute;left:497.32px;top:0;width:6px;height:41px;background:linear-gradient(90deg,#7c7c7c,#b8b8b8 35%,rgba(233,233,233,0))"></div><div style="position:absolute;left:487.82px;top:0;width:9.6px;height:41.3px;border-radius:0 0 1.5px 1.5px;background:linear-gradient(180deg,#2c2c2c 0,#2c2c2c 16.6px,#484848 16.6px,#484848 29.3px,#0c0c0c 29.3px)"></div><div style="position:absolute;left:487.82px;top:0;width:9.6px;height:41.3px;border-radius:0 0 1.5px 1.5px;background:linear-gradient(90deg,rgba(0,0,0,0.2),rgba(0,0,0,0) 25%,rgba(255,255,255,0) 55%,rgba(255,255,255,0.1) 80%,rgba(255,255,255,0.04))"></div><div style="position:absolute;left:488.02px;top:29.3px;width:1.6px;height:11px;background:rgba(255,255,255,0.13)"></div><svg style="position:absolute;left:487.82px;top:35px" width="10" height="7" viewBox="0 0 10 7"><path d="M1.2 1.6 Q2.5 3 5.2 3.2 Q2.5 3.8 1.2 5 Z" fill="#c8c8c8" opacity="0.8"/><path d="M1.2 5.2 Q5 3.4 9.2 5.5 V6 H1.2 Z" fill="#222"/></svg><div style="position:absolute;left:518.52px;top:0;width:6px;height:41px;background:linear-gradient(90deg,#7c7c7c,#b8b8b8 35%,rgba(233,233,233,0))"></div><div style="position:absolute;left:509.02px;top:0;width:9.6px;height:41.3px;border-radius:0 0 1.5px 1.5px;background:linear-gradient(180deg,#2c2c2c 0,#2c2c2c 16.6px,#484848 16.6px,#484848 29.3px,#0c0c0c 29.3px)"></div><div style="position:absolute;left:509.02px;top:0;width:9.6px;height:41.3px;border-radius:0 0 1.5px 1.5px;background:linear-gradient(90deg,rgba(0,0,0,0.2),rgba(0,0,0,0) 25%,rgba(255,255,255,0) 55%,rgba(255,255,255,0.1) 80%,rgba(255,255,255,0.04))"></div><div style="position:absolute;left:509.22px;top:29.3px;width:1.6px;height:11px;background:rgba(255,255,255,0.13)"></div><svg style="position:absolute;left:509.02px;top:35px" width="10" height="7" viewBox="0 0 10 7"><path d="M1.2 1.6 Q2.5 3 5.2 3.2 Q2.5 3.8 1.2 5 Z" fill="#c8c8c8" opacity="0.8"/><path d="M1.2 5.2 Q5 3.4 9.2 5.5 V6 H1.2 Z" fill="#222"/></svg><div style="position:absolute;left:549.22px;top:0;width:6px;height:41px;background:linear-gradient(90deg,#7c7c7c,#b8b8b8 35%,rgba(233,233,233,0))"></div><div style="position:absolute;left:539.72px;top:0;width:9.6px;height:41.3px;border-radius:0 0 1.5px 1.5px;background:linear-gradient(180deg,#2c2c2c 0,#2c2c2c 16.6px,#484848 16.6px,#484848 29.3px,#0c0c0c 29.3px)"></div><div style="position:absolute;left:539.72px;top:0;width:9.6px;height:41.3px;border-radius:0 0 1.5px 1.5px;background:linear-gradient(90deg,rgba(0,0,0,0.2),rgba(0,0,0,0) 25%,rgba(255,255,255,0) 55%,rgba(255,255,255,0.1) 80%,rgba(255,255,255,0.04))"></div><div style="position:absolute;left:539.92px;top:29.3px;width:1.6px;height:11px;background:rgba(255,255,255,0.13)"></div><svg style="position:absolute;left:539.72px;top:35px" width="10" height="7" viewBox="0 0 10 7"><path d="M1.2 1.6 Q2.5 3 5.2 3.2 Q2.5 3.8 1.2 5 Z" fill="#c8c8c8" opacity="0.8"/><path d="M1.2 5.2 Q5 3.4 9.2 5.5 V6 H1.2 Z" fill="#222"/></svg><div style="position:absolute;left:569.62px;top:0;width:6px;height:41px;background:linear-gradient(90deg,#7c7c7c,#b8b8b8 35%,rgba(233,233,233,0))"></div><div style="position:absolute;left:560.12px;top:0;width:9.6px;height:41.3px;border-radius:0 0 1.5px 1.5px;background:linear-gradient(180deg,#2c2c2c 0,#2c2c2c 16.6px,#484848 16.6px,#484848 29.3px,#0c0c0c 29.3px)"></div><div style="position:absolute;left:560.12px;top:0;width:9.6px;height:41.3px;border-radius:0 0 1.5px 1.5px;background:linear-gradient(90deg,rgba(0,0,0,0.2),rgba(0,0,0,0) 25%,rgba(255,255,255,0) 55%,rgba(255,255,255,0.1) 80%,rgba(255,255,255,0.04))"></div><div style="position:absolute;left:560.32px;top:29.3px;width:1.6px;height:11px;background:rgba(255,255,255,0.13)"></div><svg style="position:absolute;left:560.12px;top:35px" width="10" height="7" viewBox="0 0 10 7"><path d="M1.2 1.6 Q2.5 3 5.2 3.2 Q2.5 3.8 1.2 5 Z" fill="#c8c8c8" opacity="0.8"/><path d="M1.2 5.2 Q5 3.4 9.2 5.5 V6 H1.2 Z" fill="#222"/></svg><div style="position:absolute;left:590.42px;top:0;width:6px;height:41px;background:linear-gradient(90deg,#7c7c7c,#b8b8b8 35%,rgba(233,233,233,0))"></div><div style="position:absolute;left:580.92px;top:0;width:9.6px;height:41.3px;border-radius:0 0 1.5px 1.5px;background:linear-gradient(180deg,#2c2c2c 0,#2c2c2c 16.6px,#484848 16.6px,#484848 29.3px,#0c0c0c 29.3px)"></div><div style="position:absolute;left:580.92px;top:0;width:9.6px;height:41.3px;border-radius:0 0 1.5px 1.5px;background:linear-gradient(90deg,rgba(0,0,0,0.2),rgba(0,0,0,0) 25%,rgba(255,255,255,0) 55%,rgba(255,255,255,0.1) 80%,rgba(255,255,255,0.04))"></div><div style="position:absolute;left:581.12px;top:29.3px;width:1.6px;height:11px;background:rgba(255,255,255,0.13)"></div><svg style="position:absolute;left:580.92px;top:35px" width="10" height="7" viewBox="0 0 10 7"><path d="M1.2 1.6 Q2.5 3 5.2 3.2 Q2.5 3.8 1.2 5 Z" fill="#c8c8c8" opacity="0.8"/><path d="M1.2 5.2 Q5 3.4 9.2 5.5 V6 H1.2 Z" fill="#222"/></svg><div style="position:absolute;left:620.36px;top:0;width:6px;height:41px;background:linear-gradient(90deg,#7c7c7c,#b8b8b8 35%,rgba(233,233,233,0))"></div><div style="position:absolute;left:610.86px;top:0;width:9.6px;height:41.3px;border-radius:0 0 1.5px 1.5px;background:linear-gradient(180deg,#2c2c2c 0,#2c2c2c 16.6px,#484848 16.6px,#484848 29.3px,#0c0c0c 29.3px)"></div><div style="position:absolute;left:610.86px;top:0;width:9.6px;height:41.3px;border-radius:0 0 1.5px 1.5px;background:linear-gradient(90deg,rgba(0,0,0,0.2),rgba(0,0,0,0) 25%,rgba(255,255,255,0) 55%,rgba(255,255,255,0.1) 80%,rgba(255,255,255,0.04))"></div><div style="position:absolute;left:611.06px;top:29.3px;width:1.6px;height:11px;background:rgba(255,255,255,0.13)"></div><svg style="position:absolute;left:610.86px;top:35px" width="10" height="7" viewBox="0 0 10 7"><path d="M1.2 1.6 Q2.5 3 5.2 3.2 Q2.5 3.8 1.2 5 Z" fill="#c8c8c8" opacity="0.8"/><path d="M1.2 5.2 Q5 3.4 9.2 5.5 V6 H1.2 Z" fill="#222"/></svg><div style="position:absolute;left:641.56px;top:0;width:6px;height:41px;background:linear-gradient(90deg,#7c7c7c,#b8b8b8 35%,rgba(233,233,233,0))"></div><div style="position:absolute;left:632.06px;top:0;width:9.6px;height:41.3px;border-radius:0 0 1.5px 1.5px;background:linear-gradient(180deg,#2c2c2c 0,#2c2c2c 16.6px,#484848 16.6px,#484848 29.3px,#0c0c0c 29.3px)"></div><div style="position:absolute;left:632.06px;top:0;width:9.6px;height:41.3px;border-radius:0 0 1.5px 1.5px;background:linear-gradient(90deg,rgba(0,0,0,0.2),rgba(0,0,0,0) 25%,rgba(255,255,255,0) 55%,rgba(255,255,255,0.1) 80%,rgba(255,255,255,0.04))"></div><div style="position:absolute;left:632.26px;top:29.3px;width:1.6px;height:11px;background:rgba(255,255,255,0.13)"></div><svg style="position:absolute;left:632.06px;top:35px" width="10" height="7" viewBox="0 0 10 7"><path d="M1.2 1.6 Q2.5 3 5.2 3.2 Q2.5 3.8 1.2 5 Z" fill="#c8c8c8" opacity="0.8"/><path d="M1.2 5.2 Q5 3.4 9.2 5.5 V6 H1.2 Z" fill="#222"/></svg><div style="position:absolute;left:672.26px;top:0;width:6px;height:41px;background:linear-gradient(90deg,#7c7c7c,#b8b8b8 35%,rgba(233,233,233,0))"></div><div style="position:absolute;left:662.76px;top:0;width:9.6px;height:41.3px;border-radius:0 0 1.5px 1.5px;background:linear-gradient(180deg,#2c2c2c 0,#2c2c2c 16.6px,#484848 16.6px,#484848 29.3px,#0c0c0c 29.3px)"></div><div style="position:absolute;left:662.76px;top:0;width:9.6px;height:41.3px;border-radius:0 0 1.5px 1.5px;background:linear-gradient(90deg,rgba(0,0,0,0.2),rgba(0,0,0,0) 25%,rgba(255,255,255,0) 55%,rgba(255,255,255,0.1) 80%,rgba(255,255,255,0.04))"></div><div style="position:absolute;left:662.96px;top:29.3px;width:1.6px;height:11px;background:rgba(255,255,255,0.13)"></div><svg style="position:absolute;left:662.76px;top:35px" width="10" height="7" viewBox="0 0 10 7"><path d="M1.2 1.6 Q2.5 3 5.2 3.2 Q2.5 3.8 1.2 5 Z" fill="#c8c8c8" opacity="0.8"/><path d="M1.2 5.2 Q5 3.4 9.2 5.5 V6 H1.2 Z" fill="#222"/></svg><div style="position:absolute;left:692.66px;top:0;width:6px;height:41px;background:linear-gradient(90deg,#7c7c7c,#b8b8b8 35%,rgba(233,233,233,0))"></div><div style="position:absolute;left:683.16px;top:0;width:9.6px;height:41.3px;border-radius:0 0 1.5px 1.5px;background:linear-gradient(180deg,#2c2c2c 0,#2c2c2c 16.6px,#484848 16.6px,#484848 29.3px,#0c0c0c 29.3px)"></div><div style="position:absolute;left:683.16px;top:0;width:9.6px;height:41.3px;border-radius:0 0 1.5px 1.5px;background:linear-gradient(90deg,rgba(0,0,0,0.2),rgba(0,0,0,0) 25%,rgba(255,255,255,0) 55%,rgba(255,255,255,0.1) 80%,rgba(255,255,255,0.04))"></div><div style="position:absolute;left:683.36px;top:29.3px;width:1.6px;height:11px;background:rgba(255,255,255,0.13)"></div><svg style="position:absolute;left:683.16px;top:35px" width="10" height="7" viewBox="0 0 10 7"><path d="M1.2 1.6 Q2.5 3 5.2 3.2 Q2.5 3.8 1.2 5 Z" fill="#c8c8c8" opacity="0.8"/><path d="M1.2 5.2 Q5 3.4 9.2 5.5 V6 H1.2 Z" fill="#222"/></svg><div style="position:absolute;left:713.46px;top:0;width:6px;height:41px;background:linear-gradient(90deg,#7c7c7c,#b8b8b8 35%,rgba(233,233,233,0))"></div><div style="position:absolute;left:703.96px;top:0;width:9.6px;height:41.3px;border-radius:0 0 1.5px 1.5px;background:linear-gradient(180deg,#2c2c2c 0,#2c2c2c 16.6px,#484848 16.6px,#484848 29.3px,#0c0c0c 29.3px)"></div><div style="position:absolute;left:703.96px;top:0;width:9.6px;height:41.3px;border-radius:0 0 1.5px 1.5px;background:linear-gradient(90deg,rgba(0,0,0,0.2),rgba(0,0,0,0) 25%,rgba(255,255,255,0) 55%,rgba(255,255,255,0.1) 80%,rgba(255,255,255,0.04))"></div><div style="position:absolute;left:704.16px;top:29.3px;width:1.6px;height:11px;background:rgba(255,255,255,0.13)"></div><svg style="position:absolute;left:703.96px;top:35px" width="10" height="7" viewBox="0 0 10 7"><path d="M1.2 1.6 Q2.5 3 5.2 3.2 Q2.5 3.8 1.2 5 Z" fill="#c8c8c8" opacity="0.8"/><path d="M1.2 5.2 Q5 3.4 9.2 5.5 V6 H1.2 Z" fill="#222"/></svg><div style="position:absolute;left:743.40px;top:0;width:6px;height:41px;background:linear-gradient(90deg,#7c7c7c,#b8b8b8 35%,rgba(233,233,233,0))"></div><div style="position:absolute;left:733.90px;top:0;width:9.6px;height:41.3px;border-radius:0 0 1.5px 1.5px;background:linear-gradient(180deg,#2c2c2c 0,#2c2c2c 16.6px,#484848 16.6px,#484848 29.3px,#0c0c0c 29.3px)"></div><div style="position:absolute;left:733.90px;top:0;width:9.6px;height:41.3px;border-radius:0 0 1.5px 1.5px;background:linear-gradient(90deg,rgba(0,0,0,0.2),rgba(0,0,0,0) 25%,rgba(255,255,255,0) 55%,rgba(255,255,255,0.1) 80%,rgba(255,255,255,0.04))"></div><div style="position:absolute;left:734.10px;top:29.3px;width:1.6px;height:11px;background:rgba(255,255,255,0.13)"></div><svg style="position:absolute;left:733.90px;top:35px" width="10" height="7" viewBox="0 0 10 7"><path d="M1.2 1.6 Q2.5 3 5.2 3.2 Q2.5 3.8 1.2 5 Z" fill="#c8c8c8" opacity="0.8"/><path d="M1.2 5.2 Q5 3.4 9.2 5.5 V6 H1.2 Z" fill="#222"/></svg><div style="position:absolute;left:764.60px;top:0;width:6px;height:41px;background:linear-gradient(90deg,#7c7c7c,#b8b8b8 35%,rgba(233,233,233,0))"></div><div style="position:absolute;left:755.10px;top:0;width:9.6px;height:41.3px;border-radius:0 0 1.5px 1.5px;background:linear-gradient(180deg,#2c2c2c 0,#2c2c2c 16.6px,#484848 16.6px,#484848 29.3px,#0c0c0c 29.3px)"></div><div style="position:absolute;left:755.10px;top:0;width:9.6px;height:41.3px;border-radius:0 0 1.5px 1.5px;background:linear-gradient(90deg,rgba(0,0,0,0.2),rgba(0,0,0,0) 25%,rgba(255,255,255,0) 55%,rgba(255,255,255,0.1) 80%,rgba(255,255,255,0.04))"></div><div style="position:absolute;left:755.30px;top:29.3px;width:1.6px;height:11px;background:rgba(255,255,255,0.13)"></div><svg style="position:absolute;left:755.10px;top:35px" width="10" height="7" viewBox="0 0 10 7"><path d="M1.2 1.6 Q2.5 3 5.2 3.2 Q2.5 3.8 1.2 5 Z" fill="#c8c8c8" opacity="0.8"/><path d="M1.2 5.2 Q5 3.4 9.2 5.5 V6 H1.2 Z" fill="#222"/></svg><div style="position:absolute;left:795.30px;top:0;width:6px;height:41px;background:linear-gradient(90deg,#7c7c7c,#b8b8b8 35%,rgba(233,233,233,0))"></div><div style="position:absolute;left:785.80px;top:0;width:9.6px;height:41.3px;border-radius:0 0 1.5px 1.5px;background:linear-gradient(180deg,#2c2c2c 0,#2c2c2c 16.6px,#484848 16.6px,#484848 29.3px,#0c0c0c 29.3px)"></div><div style="position:absolute;left:785.80px;top:0;width:9.6px;height:41.3px;border-radius:0 0 1.5px 1.5px;background:linear-gradient(90deg,rgba(0,0,0,0.2),rgba(0,0,0,0) 25%,rgba(255,255,255,0) 55%,rgba(255,255,255,0.1) 80%,rgba(255,255,255,0.04))"></div><div style="position:absolute;left:786.00px;top:29.3px;width:1.6px;height:11px;background:rgba(255,255,255,0.13)"></div><svg style="position:absolute;left:785.80px;top:35px" width="10" height="7" viewBox="0 0 10 7"><path d="M1.2 1.6 Q2.5 3 5.2 3.2 Q2.5 3.8 1.2 5 Z" fill="#c8c8c8" opacity="0.8"/><path d="M1.2 5.2 Q5 3.4 9.2 5.5 V6 H1.2 Z" fill="#222"/></svg><div style="position:absolute;left:815.70px;top:0;width:6px;height:41px;background:linear-gradient(90deg,#7c7c7c,#b8b8b8 35%,rgba(233,233,233,0))"></div><div style="position:absolute;left:806.20px;top:0;width:9.6px;height:41.3px;border-radius:0 0 1.5px 1.5px;background:linear-gradient(180deg,#2c2c2c 0,#2c2c2c 16.6px,#484848 16.6px,#484848 29.3px,#0c0c0c 29.3px)"></div><div style="position:absolute;left:806.20px;top:0;width:9.6px;height:41.3px;border-radius:0 0 1.5px 1.5px;background:linear-gradient(90deg,rgba(0,0,0,0.2),rgba(0,0,0,0) 25%,rgba(255,255,255,0) 55%,rgba(255,255,255,0.1) 80%,rgba(255,255,255,0.04))"></div><div style="position:absolute;left:806.40px;top:29.3px;width:1.6px;height:11px;background:rgba(255,255,255,0.13)"></div><svg style="position:absolute;left:806.20px;top:35px" width="10" height="7" viewBox="0 0 10 7"><path d="M1.2 1.6 Q2.5 3 5.2 3.2 Q2.5 3.8 1.2 5 Z" fill="#c8c8c8" opacity="0.8"/><path d="M1.2 5.2 Q5 3.4 9.2 5.5 V6 H1.2 Z" fill="#222"/></svg>
<div style="position:absolute;left:0;top:0;width:812px;height:1px;background:#555"></div>
<div style="position:absolute;left:0;top:68px;width:812px;height:1.5px;background:#3a3a3a"></div>
<div class="t" style="left:111.30px;top:49.3px;font-size:13px;line-height:13px;color:#6e7480;transform:scaleX(0.92);transform-origin:0 0">C</div>
<div class="t" style="left:234.34px;top:46.6px;font-size:15px;line-height:15px;color:#6e7480;transform:scaleX(0.82);transform-origin:0 0;margin-left:1.2px">c<span style="font-size:11px;vertical-align:2px;letter-spacing:-0.6px"></span></div>
<div class="t" style="left:357.38px;top:46.6px;font-size:15px;line-height:15px;color:#6e7480;transform:scaleX(0.82);transform-origin:0 0;margin-left:1.2px">c<span style="font-size:11px;vertical-align:2px;letter-spacing:-0.6px">&#39;</span></div>
<div class="t" style="left:480.42px;top:46.6px;font-size:15px;line-height:15px;color:#6e7480;transform:scaleX(0.82);transform-origin:0 0;margin-left:1.2px">c<span style="font-size:11px;vertical-align:2px;letter-spacing:-0.6px">&#39;&#39;</span></div>
<div class="t" style="left:603.46px;top:46.6px;font-size:15px;line-height:15px;color:#6e7480;transform:scaleX(0.82);transform-origin:0 0;margin-left:1.2px">c<span style="font-size:11px;vertical-align:2px;letter-spacing:-0.6px">&#39;&#39;&#39;</span></div>
<div class="t" style="left:726.50px;top:46.6px;font-size:15px;line-height:15px;color:#6e7480;transform:scaleX(0.82);transform-origin:0 0;margin-left:1.2px">c<span style="font-size:11px;vertical-align:2px;letter-spacing:-0.6px">&#39;&#39;&#39;&#39;</span></div>
</div>
<div style="position:absolute;left:0px;top:103px;width:16px;height:69px;background:#fff"></div>
<div style="position:absolute;left:0.5px;top:104px;width:15px;height:67px;background:#fdfdfd;border:1px solid #e6e6e6;box-sizing:border-box;border-radius:3px"></div>
<div class="t" style="left:4px;top:136.28px;font-size:9px;line-height:9px;height:11.700000000000001px;color:#555;font-weight:400;font-family:"Liberation Sans", sans-serif;">&#171;</div>
<div style="position:absolute;left:828px;top:103px;width:14px;height:69px;background:#fff"></div>
<div style="position:absolute;left:828px;top:104px;width:14px;height:67px;background:#fdfdfd;border:1px solid #e6e6e6;box-sizing:border-box;border-radius:3px"></div>
<div class="t" style="left:832px;top:136.28px;font-size:9px;line-height:9px;height:11.700000000000001px;color:#555;font-weight:400;font-family:"Liberation Sans", sans-serif;">&#187;</div>
<div style="position:absolute;left:4px;top:84.8px;width:15.5px;height:9.2px;background:#006d35;border-radius:4.6px"></div>
<div style="position:absolute;left:12.6px;top:86.3px;width:6.2px;height:6.2px;border-radius:50%;background:#fff"></div>
<div style="position:absolute;left:27px;top:80.5px;width:1px;height:18.5px;background:#d4d4d4"></div>
<div style="position:absolute;left:162px;top:80.5px;width:1px;height:18.5px;background:#d4d4d4"></div>
<div style="position:absolute;left:307px;top:80.5px;width:1px;height:18.5px;background:#d4d4d4"></div>
<div style="position:absolute;left:75.3px;top:80.3px;width:18.3px;height:18.4px;background:#dadada;border:0.8px solid #c8c8c8;border-radius:2px;box-sizing:border-box"></div>
<div style="position:absolute;left:355.5px;top:80.3px;width:18px;height:18.4px;background:#dadada;border:0.8px solid #c8c8c8;border-radius:2px;box-sizing:border-box"></div>
<svg style="position:absolute;left:39px;top:88px" width="8" height="6" viewBox="0 0 8 6"><ellipse cx="4" cy="3" rx="2.9" ry="1.9" fill="none" stroke="#111" stroke-width="1.1"/><ellipse cx="4" cy="3" rx="1.2" ry="1.6" fill="#fff" transform="rotate(30 4 3)"/><path d="M1.4 2.2 Q1 3.5 2.2 4.3 M6.6 3.8 Q7 2.5 5.8 1.7" stroke="#111" stroke-width="1.2" fill="none"/></svg>
<svg style="position:absolute;left:59px;top:82px" width="8" height="14" viewBox="0 0 8 14"><ellipse cx="3.3" cy="11" rx="2.8" ry="1.9" fill="none" stroke="#222" stroke-width="1" transform="rotate(-25 3.3 11)"/><path d="M5.8 10.5 V1" stroke="#222" stroke-width="0.9"/></svg>
<svg style="position:absolute;left:79px;top:82px" width="8" height="14" viewBox="0 0 8 14"><ellipse cx="3.3" cy="11" rx="2.9" ry="2" fill="#111" transform="rotate(-25 3.3 11)"/><path d="M5.9 10.5 V1" stroke="#111" stroke-width="1"/></svg>
<svg style="position:absolute;left:99px;top:82px" width="9" height="14" viewBox="0 0 9 14"><ellipse cx="3.3" cy="11" rx="2.9" ry="2" fill="#111" transform="rotate(-25 3.3 11)"/><path d="M5.9 10.5 V1" stroke="#111" stroke-width="1"/><path d="M5.9 1 Q6.5 4 8.5 6 Q9 8 8 10" fill="none" stroke="#111" stroke-width="1.1"/></svg>
<svg style="position:absolute;left:120px;top:82px" width="9" height="14" viewBox="0 0 9 14"><ellipse cx="3.3" cy="11" rx="2.9" ry="2" fill="#111" transform="rotate(-25 3.3 11)"/><path d="M5.9 10.5 V1" stroke="#111" stroke-width="1"/><path d="M5.9 1.5 H8.5 M5.9 3.5 H8.5" stroke="#111" stroke-width="1.2"/></svg>
<div style="position:absolute;left:143px;top:88px;width:3px;height:3px;border-radius:50%;background:#111"></div>
<svg style="position:absolute;left:173px;top:82px" width="12" height="13" viewBox="0 0 12 13"><g><path d="M1 0.5 V11.5 Q5 9 5 7 Q5 5 1 7" fill="none" stroke="#111" stroke-width="1.1"/></g><g transform="translate(5,0)"><path d="M1 0.5 V11.5 Q5 9 5 7 Q5 5 1 7" fill="none" stroke="#111" stroke-width="1.1"/></g></svg>
<svg style="position:absolute;left:194px;top:82px" width="7" height="13" viewBox="0 0 7 13"><path d="M1 0.5 V11.5 Q5 9 5 7 Q5 5 1 7" fill="none" stroke="#111" stroke-width="1.1"/></svg>
<svg style="position:absolute;left:217px;top:81px" width="6" height="15" viewBox="0 0 6 15"><path d="M1 0.5 V10 L4.8 8.5 M4.8 4 V14.5 M1 5.5 L4.8 4" fill="none" stroke="#111" stroke-width="1"/></svg>
<svg style="position:absolute;left:235px;top:81px" width="8" height="15" viewBox="0 0 8 15"><path d="M2.5 0.5 V14.5 M5.5 0 V14 M0.5 5.5 L7.5 4 M0.5 10 L7.5 8.5" fill="none" stroke="#111" stroke-width="1.1"/></svg>
<svg style="position:absolute;left:256px;top:86px" width="7" height="7" viewBox="0 0 7 7"><path d="M1 1 L6 6 M6 1 L1 6" stroke="#222" stroke-width="1.3"/></svg>
<svg style="position:absolute;left:275px;top:84px" width="10" height="10" viewBox="0 0 10 10"><rect x="0.5" y="0.5" width="9" height="9" fill="#fff" stroke="#aaa"/><rect x="2.5" y="2.5" width="5" height="5" fill="#1fa34a"/></svg>
<svg style="position:absolute;left:292px;top:88px" width="6" height="4" viewBox="0 0 6 4"><path d="M0 0 H6 L3 4 Z" fill="#666"/></svg>
<svg style="position:absolute;left:318px;top:82.5px" width="11" height="13" viewBox="0 0 11 13"><path d="M1.8 0.5 L4.2 3.6 Q2.6 5.2 2.6 6.2 L4.6 9.2 Q2.2 8.6 2.2 10.2 Q2.4 11.4 3.4 12.2" fill="none" stroke="#111" stroke-width="1.15"/><circle cx="7.6" cy="4.2" r="1.25" fill="#111"/><path d="M7 5 Q8.8 5.2 10 3.2 L7.6 10.8" fill="none" stroke="#111" stroke-width="1.1"/></svg>
<div class="t" style="left:337.5px;top:85.19px;font-size:11px;line-height:11px;height:14.3px;color:#cfcfcf;font-weight:400;font-family:"Liberation Sans", sans-serif;">D</div>
<div class="t" style="left:345.6px;top:84.40px;font-size:6.5px;line-height:6.5px;height:8.450000000000001px;color:#cfcfcf;font-weight:400;font-family:"Liberation Sans", sans-serif;">7</div>
<svg style="position:absolute;left:358px;top:82.5px" width="11" height="13" viewBox="0 0 11 13"><path d="M1.8 0.5 L4.2 3.6 Q2.6 5.2 2.6 6.2 L4.6 9.2 Q2.2 8.6 2.2 10.2 Q2.4 11.4 3.4 12.2" fill="none" stroke="#22c6d6" stroke-width="1.15"/><circle cx="7.6" cy="4.2" r="1.25" fill="#22c6d6"/><path d="M7 5 Q8.8 5.2 10 3.2 L7.6 10.8" fill="none" stroke="#22c6d6" stroke-width="1.1"/></svg>
<svg style="position:absolute;left:379.5px;top:82.5px" width="10" height="13" viewBox="0 0 10 13"><path d="M5.6 0.5 V8.5" stroke="#111" stroke-width="0.9"/><ellipse cx="3.2" cy="10.3" rx="2.6" ry="1.9" fill="#111" transform="rotate(-25 3.2 10.3)"/><ellipse cx="7" cy="6.9" rx="2.6" ry="1.9" fill="#111" transform="rotate(-25 7 6.9)"/><path d="M0.5 8.9 L9.7 6" stroke="#111" stroke-width="0.9"/></svg>
<svg style="position:absolute;left:776px;top:81px" width="8" height="15" viewBox="0 0 8 15"><path d="M4 4 Q4.5 1.5 7.5 0.5" fill="none" stroke="#555" stroke-width="0.6"/><rect x="0.8" y="3.8" width="6.4" height="10.6" rx="3.2" fill="#111"/><path d="M0.8 8 H7.2 M4 3.8 V8" stroke="#777" stroke-width="0.6"/></svg>
<svg style="position:absolute;left:794px;top:82px" width="13" height="13" viewBox="0 0 13 13"><g transform="translate(6.5 6.5)"><circle r="4.6" fill="#1a1a1a"/><rect x="-1.3" y="-6.3" width="2.6" height="3" fill="#1a1a1a" transform="rotate(0)"/><rect x="-1.3" y="-6.3" width="2.6" height="3" fill="#1a1a1a" transform="rotate(45)"/><rect x="-1.3" y="-6.3" width="2.6" height="3" fill="#1a1a1a" transform="rotate(90)"/><rect x="-1.3" y="-6.3" width="2.6" height="3" fill="#1a1a1a" transform="rotate(135)"/><rect x="-1.3" y="-6.3" width="2.6" height="3" fill="#1a1a1a" transform="rotate(180)"/><rect x="-1.3" y="-6.3" width="2.6" height="3" fill="#1a1a1a" transform="rotate(225)"/><rect x="-1.3" y="-6.3" width="2.6" height="3" fill="#1a1a1a" transform="rotate(270)"/><rect x="-1.3" y="-6.3" width="2.6" height="3" fill="#1a1a1a" transform="rotate(315)"/><circle r="1.9" fill="#fff"/></g></svg>
<svg style="position:absolute;left:812px;top:88px" width="6" height="4" viewBox="0 0 6 4"><path d="M0 0 H6 L3 4 Z" fill="#666"/></svg>
<svg style="position:absolute;left:828.5px;top:84.7px" width="10" height="10" viewBox="-5 -5 10 10"><circle r="5" fill="#111"/><circle cx="0.2" cy="-2.6" r="0.95" fill="#fff"/><path d="M-1.2 -1 H0.9 V2.6 H1.5 V3.4 H-1.4 V2.6 H-0.6 V-0.2 H-1.2 Z" fill="#fff"/></svg>
<svg style="position:absolute;left:9px;top:179px" width="14" height="12" viewBox="0 0 14 12"><circle cx="3.5" cy="9" r="2.2" fill="none" stroke="#bdbdbd" stroke-width="1"/><circle cx="9.5" cy="9" r="2.2" fill="none" stroke="#bdbdbd" stroke-width="1"/><path d="M4.5 7 L10 0.5 M8.5 7 L3 0.5" stroke="#bdbdbd" stroke-width="1"/></svg>
<svg style="position:absolute;left:9px;top:197px" width="14" height="12" viewBox="0 0 14 12"><path d="M3 0.8 H8 L10.5 3.3 V10.5 H3 Z" fill="#fafafa" stroke="#bdbdbd" stroke-width="1"/></svg>
<svg style="position:absolute;left:9px;top:214px" width="14" height="12" viewBox="0 0 14 12"><rect x="2" y="1" width="4" height="9" fill="none" stroke="#bdbdbd"/><path d="M5 3.5 H9 L11 5.5 V11 H5 Z" fill="#fafafa" stroke="#bdbdbd" stroke-width="1"/></svg>
<svg style="position:absolute;left:8px;top:233px" width="14" height="12" viewBox="0 0 14 12"><path d="M3.5 1 L5.5 0.5 V4 L3.5 5 Z M3.5 6 L5.5 5 V9.5 L3.5 10.5 Z" fill="#777"/><rect x="6.5" y="0.7" width="3" height="10" fill="#666"/><path d="M10.5 1 L12 2 V9 L10.5 10 Z" fill="#888"/></svg>
<svg style="position:absolute;left:8px;top:251px" width="14" height="12" viewBox="0 0 14 12"><path d="M6.5 0.5 V11" stroke="#444" stroke-width="0.7"/><path d="M8.5 2.5 Q4.5 2 4.5 5.8 Q4.5 9.5 8.5 9" fill="none" stroke="#2a2a2a" stroke-width="1.8"/></svg>
<svg style="position:absolute;left:9px;top:268px" width="14" height="12" viewBox="0 0 14 12"><path d="M1 3 L11 1.5 M1 5 L11 3.5" stroke="#bdbdbd" stroke-width="1.3"/><path d="M3 6 L9 11 M9 6 L3 11" stroke="#bdbdbd" stroke-width="1"/></svg>
<svg style="position:absolute;left:9px;top:286px" width="14" height="12" viewBox="0 0 14 12"><path d="M1 2.5 L11 1" stroke="#bdbdbd" stroke-width="2"/><path d="M6 3 V10" stroke="#bdbdbd" stroke-width="1"/></svg>
<svg style="position:absolute;left:9px;top:304px" width="14" height="12" viewBox="0 0 14 12"><path d="M1 9 Q2 11 3 8 M3 2 V9 M5 6 L7 2 L9 6 M6 8 L11 4" fill="none" stroke="#bdbdbd" stroke-width="1"/></svg>
<svg style="position:absolute;left:9px;top:321px" width="14" height="12" viewBox="0 0 14 12"><path d="M1 9 Q2 11 3 8 M3 2 V9 M5 7 Q7 4 9 7 M10 2 V9 Q9 11 11 9" fill="none" stroke="#bdbdbd" stroke-width="1"/></svg>
<svg style="position:absolute;left:9px;top:338px" width="14" height="12" viewBox="0 0 14 12"><path d="M2 2 L10 10 M10 2 L2 10 M6 1 V11" stroke="#bdbdbd" stroke-width="1"/></svg>
<svg style="position:absolute;left:9px;top:356px" width="14" height="12" viewBox="0 0 14 12"><path d="M1 7 H4 M8 7 H11 M6 4 V10" stroke="#bdbdbd" stroke-width="1"/></svg>
<div style="position:absolute;left:11px;top:373px;width:1px;height:9px;background:#2a2a2a"></div>
<svg style="position:absolute;left:22px;top:376px" width="6" height="4" viewBox="0 0 6 4"><path d="M0 0 H6 L3 4 Z" fill="#444"/></svg>
<svg style="position:absolute;left:9px;top:391px" width="14" height="12" viewBox="0 0 14 12"><path d="M1 1.5 H11 M3 1.5 V10" stroke="#bdbdbd" stroke-width="1.2"/><text x="5" y="10" font-size="5" fill="#bdbdbd">1</text></svg>
<svg style="position:absolute;left:9px;top:408px" width="14" height="12" viewBox="0 0 14 12"><path d="M1 1.5 H11 M3 1.5 V10" stroke="#bdbdbd" stroke-width="1.2"/><text x="5" y="10" font-size="5" fill="#bdbdbd">2</text></svg>
<svg style="position:absolute;left:9px;top:426px" width="14" height="12" viewBox="0 0 14 12"><path d="M2 9 Q6 0 10 9" fill="none" stroke="#bdbdbd" stroke-width="1.1"/><circle cx="6" cy="8" r="0.8" fill="#bdbdbd"/></svg>
<svg style="position:absolute;left:9px;top:443px" width="14" height="12" viewBox="0 0 14 12"><text x="0.5" y="10" font-size="10.5" font-style="italic" font-family="Liberation Serif" fill="#a8a8a8">tr</text></svg>
<div class="t" style="left:11px;top:462.28px;font-size:9px;line-height:9px;height:11.700000000000001px;color:#8c8c8c;font-weight:400;font-family:"Liberation Sans", sans-serif;">C:</div>
<svg style="position:absolute;left:9px;top:479px" width="14" height="12" viewBox="0 0 14 12"><rect x="2" y="1.5" width="8" height="2.5" fill="#6a6a6a"/><rect x="2" y="5.5" width="8" height="3.5" fill="#6a6a6a"/></svg>
<svg style="position:absolute;left:9px;top:497px" width="14" height="12" viewBox="0 0 14 12"><rect x="2" y="3" width="10" height="3.5" fill="#6a6a6a"/><path d="M8.5 3 V6.5" stroke="#f5f5f5" stroke-width="0.7"/></svg>
<div class="t" style="left:38.4px;top:178.87px;font-size:8.3px;line-height:8.3px;height:10.790000000000001px;color:#1e7a45;font-weight:400;font-family:"Liberation Sans", sans-serif;-webkit-text-stroke:0.35px #1e7a45">rock.tca*</div>
<svg style="position:absolute;left:77px;top:178px" width="8" height="8" viewBox="0 0 8 8"><path d="M0.8 0.8 L7.2 7.2 M7.2 0.8 L0.8 7.2" stroke="#555" stroke-width="1.2"/></svg>
<div style="position:absolute;left:38px;top:187.5px;width:47px;height:2px;background:#1e7a45"></div>
<div style="position:absolute;left:202px;top:191px;width:458px;height:368px;background:#fff"></div>
<div style="position:absolute;left:831px;top:191px;width:11px;height:368px;background:#efefef"></div>
<div style="position:absolute;left:832px;top:227px;width:10px;height:192px;background:#cdcdcd"></div>
<svg style="position:absolute;left:833px;top:195px" width="7" height="5" viewBox="0 0 7 5"><path d="M0.5 4.5 L3.5 1 L6.5 4.5" fill="none" stroke="#555" stroke-width="1.1"/></svg>
<svg style="position:absolute;left:833px;top:551px" width="7" height="5" viewBox="0 0 7 5"><path d="M0.5 0.5 L3.5 4 L6.5 0.5" fill="none" stroke="#555" stroke-width="1.1"/></svg>
<div style="position:absolute;left:952.8px;top:113px;width:55.2px;height:35.7px;background:#b2d8b0"></div>
<div class="t" style="left:845.8px;top:104.07px;font-size:8.3px;line-height:8.3px;color:#1a1a1a;font-weight:400;transform:scaleX(0.9300);transform-origin:0 0">Tonsatz</div>
<div class="t" style="left:876.8px;top:104.07px;font-size:8.3px;line-height:8.3px;color:#1a1a1a;font-weight:400;transform:scaleX(1.0006);transform-origin:0 0">Harmonisieren</div>
<div class="t" style="left:935.5px;top:104.07px;font-size:8.3px;line-height:8.3px;color:#1a1a1a;font-weight:400;transform:scaleX(0.9547);transform-origin:0 0">Aussetzen</div>
<div class="t" style="left:976.6px;top:104.07px;font-size:8.3px;line-height:8.3px;color:#1a1a1a;font-weight:400;transform:scaleX(0.9921);transform-origin:0 0">Umspielen</div>
<div class="t" style="left:1019.9px;top:104.07px;font-size:8.3px;line-height:8.3px;color:#1a1a1a;font-weight:400;transform:scaleX(0.9863);transform-origin:0 0">Variation</div>
<div class="t" style="left:1056px;top:104.07px;font-size:8.3px;line-height:8.3px;color:#1a1a1a;font-weight:400;transform:scaleX(0.9540);transform-origin:0 0">Variieren</div>
<div class="t" style="left:845.8px;top:140.17px;font-size:8.3px;line-height:8.3px;color:#1a1a1a;font-weight:400;transform:scaleX(0.9517);transform-origin:0 0">Analyse</div>
<div class="t" style="left:878.7px;top:140.17px;font-size:8.3px;line-height:8.3px;color:#1a1a1a;font-weight:400;transform:scaleX(0.9651);transform-origin:0 0">Prüfen</div>
<div class="t" style="left:907.2px;top:140.17px;font-size:8.3px;line-height:8.3px;color:#1a1a1a;font-weight:400;transform:scaleX(0.9244);transform-origin:0 0">Generalbass</div>
<div class="t" style="left:955.5px;top:140.17px;font-size:8.3px;line-height:8.3px;color:#1a1a1a;font-weight:400;transform:scaleX(0.9874);transform-origin:0 0">Begleitmuster</div>
<div class="t" style="left:1010.4px;top:140.17px;font-size:8.3px;line-height:8.3px;color:#1a1a1a;font-weight:400;transform:scaleX(0.9667);transform-origin:0 0">Kanon</div>
<div class="t" style="left:1040.2px;top:140.17px;font-size:8.3px;line-height:8.3px;color:#1a1a1a;font-weight:400;transform:scaleX(0.9569);transform-origin:0 0">Fuge</div>
<div class="t" style="left:845.8px;top:176.27px;font-size:8.3px;line-height:8.3px;color:#1a1a1a;font-weight:400;transform:scaleX(0.9866);transform-origin:0 0">Würfelspiel</div>
<div class="t" style="left:890.9px;top:176.27px;font-size:8.3px;line-height:8.3px;color:#1a1a1a;font-weight:400;transform:scaleX(0.9995);transform-origin:0 0">Doppeln</div>
<svg style="position:absolute;left:851px;top:83px" width="14" height="11" viewBox="0 0 14 11"><rect x="0.5" y="0.5" width="13" height="9" rx="1.5" fill="#1f1f1f"/></svg>
<svg style="position:absolute;left:897px;top:81.3px" width="12" height="14" viewBox="0 0 12 14"><path d="M1.9 1.3 H4.8 Q10.3 1.3 10.3 6.9 Q10.3 12.3 4.8 12.3 H1.9 Z" fill="none" stroke="#1f1f1f" stroke-width="1.75"/></svg>
<svg style="position:absolute;left:946px;top:80px" width="15" height="16" viewBox="0 0 15 16"><rect x="1" y="1" width="13" height="3.4" rx="1.7" fill="none" stroke="#1f1f1f" stroke-width="1.3"/><rect x="1" y="6.3" width="13" height="3.4" rx="1.7" fill="none" stroke="#1f1f1f" stroke-width="1.3"/><rect x="1" y="11.6" width="13" height="3.4" rx="1.7" fill="none" stroke="#1f1f1f" stroke-width="1.3"/></svg>
<svg style="position:absolute;left:986px;top:81px" width="20" height="14" viewBox="0 0 20 14"><path d="M2.6 4.6 Q4 2 5.3 3 Q6.5 4 7.8 2.6 Q9 1.3 10.3 2.6 Q11.5 4 12.8 2.6 Q14.2 1.3 15.5 2.6 Q16.6 3.6 17.4 5" fill="none" stroke="#1f1f1f" stroke-width="1.45"/><rect x="1" y="7.8" width="18" height="5" rx="2.4" fill="#1f1f1f"/></svg>
<svg style="position:absolute;left:1025px;top:82.3px" width="22" height="13" viewBox="0 0 22 13"><path d="M3.8 4.3 H4.2 L6 1.8 Q6.4 1.3 7 1.3 H8 Q8.6 1.3 9 1.8 L10.8 4.3 H18 Q20 4.3 20 6.3 Q20 8.3 18 8.3 H17.8 L16 10.8 Q15.6 11.3 15 11.3 H14 Q13.4 11.3 13 10.8 L11.2 8.3 H3.8 Q1.8 8.3 1.8 6.3 Q1.8 4.3 3.8 4.3 Z" fill="#1f1f1f"/></svg>
<svg style="position:absolute;left:1060.5px;top:82.3px" width="22" height="13" viewBox="0 0 22 13"><path d="M3.8 4.3 H4.2 L6 1.8 Q6.4 1.3 7 1.3 H8 Q8.6 1.3 9 1.8 L10.8 4.3 H18 Q20 4.3 20 6.3 Q20 8.3 18 8.3 H17.8 L16 10.8 Q15.6 11.3 15 11.3 H14 Q13.4 11.3 13 10.8 L11.2 8.3 H3.8 Q1.8 8.3 1.8 6.3 Q1.8 4.3 3.8 4.3 Z" fill="#fff" stroke="#1f1f1f" stroke-width="1.3"/></svg>
<svg style="position:absolute;left:849px;top:116px" width="21" height="17" viewBox="0 0 21 17"><circle cx="10.7" cy="7.4" r="5.2" fill="#fff" stroke="#1f1f1f" stroke-width="1"/><path d="M6 8 H15.4 A4.7 4.7 0 0 1 6 8 Z" fill="#1f1f1f"/><rect x="1.2" y="5.3" width="3.6" height="5.4" rx="1.3" fill="#fff" stroke="#1f1f1f" stroke-width="1"/><rect x="16.2" y="5.3" width="3.6" height="5.4" rx="1.3" fill="#fff" stroke="#1f1f1f" stroke-width="1"/><path d="M14.5 12 L17.3 15.2" stroke="#1f1f1f" stroke-width="1.2"/></svg>
<svg style="position:absolute;left:880px;top:116px" width="21" height="17" viewBox="0 0 21 17"><circle cx="10" cy="7.4" r="5.2" fill="#fff" stroke="#1f1f1f" stroke-width="1.1"/><circle cx="10" cy="7.4" r="3.3" fill="#1f1f1f"/><rect x="1.2" y="5" width="3.2" height="5" rx="1.2" fill="#1f1f1f"/><rect x="15.7" y="5" width="3.2" height="5" rx="1.2" fill="#1f1f1f"/><path d="M13.8 12 L16.8 15.4" stroke="#1f1f1f" stroke-width="1.1"/></svg>
<div style="position:absolute;left:920px;top:116.7px;width:16.5px;height:3.7px;background:#1f1f1f;border-radius:1.6px"></div>
<div class="t" style="left:922.3px;top:124.22px;font-size:8.6px;line-height:8.6px;height:11.18px;color:#333;font-weight:700;font-family:"Liberation Sans", sans-serif;">6+</div>
<svg style="position:absolute;left:971px;top:117px" width="17" height="15" viewBox="0 0 17 15"><rect x="1" y="0.5" width="4" height="14" rx="2" fill="#183a1e"/><rect x="6.5" y="0.5" width="4" height="14" rx="2" fill="#183a1e"/><rect x="12" y="0.5" width="4" height="14" rx="2" fill="#183a1e"/></svg>
<svg style="position:absolute;left:1013px;top:118px" width="17" height="14" viewBox="0 0 17 14"><rect x="4.5" y="0.8" width="11.5" height="7.5" rx="2" fill="none" stroke="#1f1f1f" stroke-width="1.2"/><rect x="0.5" y="4" width="11.5" height="8.5" rx="2" fill="#1f1f1f"/></svg>
<svg style="position:absolute;left:1040px;top:117px" width="18" height="15" viewBox="0 0 18 15"><rect x="0.5" y="0.5" width="10" height="7" rx="1.5" fill="#1f1f1f"/><rect x="7" y="6.5" width="10.5" height="8" rx="1.5" fill="#1f1f1f"/></svg>
<svg style="position:absolute;left:856px;top:152px" width="17" height="17" viewBox="0 0 17 17"><rect x="0.8" y="0.8" width="15.4" height="15.4" rx="2.5" fill="#fff" stroke="#1f1f1f" stroke-width="1.3"/><circle cx="4.5" cy="4.5" r="1.5" fill="#1f1f1f"/><circle cx="8.5" cy="8.5" r="1.5" fill="#1f1f1f"/><circle cx="12.5" cy="12.5" r="1.5" fill="#1f1f1f"/></svg>
<svg style="position:absolute;left:896.5px;top:156px" width="21" height="17" viewBox="0 0 21 17"><rect x="0.5" y="1" width="17.5" height="4.5" rx="2.2" fill="#1f1f1f"/><circle cx="14.5" cy="10.5" r="6" fill="#1f1f1f" stroke="#fff" stroke-width="0.8"/><text x="10.3" y="13.3" font-size="7.5" font-weight="700" fill="#fff" font-family="Liberation Sans">2x</text></svg>
<div style="position:absolute;left:849.4px;top:198.1px;width:9.2px;height:9.2px;box-sizing:border-box;border:1px solid #333;border-radius:50%;background:#fff"></div>
<div style="position:absolute;left:851.6px;top:200.29999999999998px;width:4.8px;height:4.8px;border-radius:50%;background:#222"></div>
<div style="position:absolute;left:849.4px;top:215.5px;width:9.2px;height:9.2px;box-sizing:border-box;border:1px solid #333;border-radius:50%;background:#fff"></div>
<div style="position:absolute;left:849.4px;top:232.8px;width:9.2px;height:9.2px;box-sizing:border-box;border:1px solid #333;border-radius:50%;background:#fff"></div>
<div class="t" style="left:862.8px;top:199.37px;font-size:8.3px;line-height:8.3px;color:#1a1a1a;font-weight:400;transform:scaleX(0.9549);transform-origin:0 0"><u>a</u>lles</div>
<div class="t" style="left:862.8px;top:216.77px;font-size:8.3px;line-height:8.3px;color:#1a1a1a;font-weight:400;transform:scaleX(0.9666);transform-origin:0 0">aktuelle <u>P</u>hrase</div>
<div class="t" style="left:862.8px;top:234.07px;font-size:8.3px;line-height:8.3px;color:#1a1a1a;font-weight:400;transform:scaleX(1.0281);transform-origin:0 0"><u>m</u>arkierter Abschnitt</div>
<div style="position:absolute;left:973.2px;top:201.2px;width:124.5px;height:36.5px;background:#dadada;border:1px solid #c2c2c2;border-radius:3px;box-sizing:border-box"></div>
<div class="t" style="left:1007.7px;top:210.67px;font-size:8.3px;line-height:8.3px;height:10.790000000000001px;color:#1a1a1a;font-weight:700;font-family:"Liberation Sans", sans-serif;">Begleitmuster</div>
<div class="t" style="left:1017px;top:221.09px;font-size:8.4px;line-height:8.4px;height:10.920000000000002px;color:#1a1a1a;font-weight:700;font-family:"Liberation Sans", sans-serif;">erzeugen</div>
<svg style="position:absolute;left:1102.7px;top:257px" width="10" height="10" viewBox="-5 -5 10 10"><circle r="5" fill="#111"/><circle cx="0.2" cy="-2.6" r="0.95" fill="#fff"/><path d="M-1.2 -1 H0.9 V2.6 H1.5 V3.4 H-1.4 V2.6 H-0.6 V-0.2 H-1.2 Z" fill="#fff"/></svg>
<div class="t" style="left:849.8px;top:265.17px;font-size:8.3px;line-height:8.3px;color:#1a1a1a;font-weight:400;transform:scaleX(1.0239);transform-origin:0 0">Melodiestimme:</div>
<div style="position:absolute;left:913.9px;top:261px;width:65.3px;height:14.1px;background:#e3e3e3;border:1px solid #c4c4c4;box-sizing:border-box"></div>
<div class="t" style="left:916.5px;top:265.30px;font-size:8.5px;line-height:8.5px;height:11.05px;color:#1a1a1a;font-weight:400;font-family:"Liberation Sans", sans-serif;">M.</div>
<svg style="position:absolute;left:969px;top:266px" width="7" height="5" viewBox="0 0 7 5"><path d="M0.5 0.8 L3.5 3.8 L6.5 0.8" fill="none" stroke="#555" stroke-width="0.9"/></svg>
<div style="position:absolute;left:849.4px;top:282.2px;width:9.4px;height:9.4px;box-sizing:border-box;border:1.1px solid #707070;border-radius:1px;background:#fff"></div>
<svg style="position:absolute;left:850.6px;top:283.7px" width="7" height="6" viewBox="0 0 7 6"><path d="M0.6 3 L2.6 5 L6.4 0.8" fill="none" stroke="#222" stroke-width="1.15"/></svg>
<div class="t" style="left:862.3px;top:283.17px;font-size:8.3px;line-height:8.3px;color:#1a1a1a;font-weight:400;transform:scaleX(1.0300);transform-origin:0 0">Stimmumfänge p<u>r</u>üfen</div>
<div style="position:absolute;left:849.4px;top:299.2px;width:9.4px;height:9.4px;box-sizing:border-box;border:1.1px solid #707070;border-radius:1px;background:#fff"></div>
<svg style="position:absolute;left:850.6px;top:300.7px" width="7" height="6" viewBox="0 0 7 6"><path d="M0.6 3 L2.6 5 L6.4 0.8" fill="none" stroke="#222" stroke-width="1.15"/></svg>
<div class="t" style="left:862.3px;top:300.27px;font-size:8.3px;line-height:8.3px;color:#1a1a1a;font-weight:400;transform:scaleX(0.9460);transform-origin:0 0">Klaviersatz</div>
<svg style="position:absolute;left:908.9px;top:298.9px" width="10" height="10" viewBox="-5 -5 10 10"><circle r="5" fill="#111"/><circle cx="0.2" cy="-2.6" r="0.95" fill="#fff"/><path d="M-1.2 -1 H0.9 V2.6 H1.5 V3.4 H-1.4 V2.6 H-0.6 V-0.2 H-1.2 Z" fill="#fff"/></svg>
<svg style="position:absolute;left:984px;top:290.1px" width="10" height="10" viewBox="-5 -5 10 10"><circle r="5" fill="#111"/><circle cx="0.2" cy="-2.6" r="0.95" fill="#fff"/><path d="M-1.2 -1 H0.9 V2.6 H1.5 V3.4 H-1.4 V2.6 H-0.6 V-0.2 H-1.2 Z" fill="#fff"/></svg>
<div style="position:absolute;left:863.5px;top:316.8px;width:9.4px;height:9.4px;box-sizing:border-box;border:1.1px solid #707070;border-radius:1px;background:#fff"></div>
<div class="t" style="left:876.3px;top:318.57px;font-size:8.3px;line-height:8.3px;color:#1a1a1a;font-weight:400;transform:scaleX(0.9953);transform-origin:0 0">Liegetöne trennen</div>
<div style="position:absolute;left:843px;top:339.3px;width:262px;height:16px;background:#d9d9d9"></div>
<div class="t" style="left:851.7px;top:344.62px;font-size:8.25px;line-height:8.25px;height:10.725px;color:#1a1a1a;font-weight:700;font-family:"Liberation Sans", sans-serif;">Komponieren</div>
<svg style="position:absolute;left:1091.7px;top:344px" width="9.3" height="5.2" viewBox="0 0 9.3 5.2"><path d="M0 0 H9.3 L4.65 5.2 Z" fill="#111"/></svg>
<div style="position:absolute;left:1106px;top:339px;width:10px;height:220px;background:#efefef"></div>
<div style="position:absolute;left:1107px;top:351px;width:9px;height:200px;background:#cdcdcd"></div>
<svg style="position:absolute;left:1108px;top:343px" width="7" height="5" viewBox="0 0 7 5"><path d="M0.5 4.5 L3.5 1 L6.5 4.5" fill="none" stroke="#555" stroke-width="1"/></svg>
<svg style="position:absolute;left:1108px;top:551px" width="7" height="5" viewBox="0 0 7 5"><path d="M0.5 0.5 L3.5 4 L6.5 0.5" fill="none" stroke="#555" stroke-width="1"/></svg>
<div style="position:absolute;left:1083.7px;top:370.0px;width:2.4px;height:2.4px;border-radius:50%;background:#111"></div>
<div style="position:absolute;left:1087.3px;top:370.0px;width:2.4px;height:2.4px;border-radius:50%;background:#111"></div>
<div style="position:absolute;left:1090.9px;top:370.0px;width:2.4px;height:2.4px;border-radius:50%;background:#111"></div>
<div class="t" style="left:849.7px;top:385.67px;font-size:8.3px;line-height:8.3px;color:#1a1a1a;font-weight:400;transform:scaleX(1.0082);transform-origin:0 0">Harmonisierungs<u>s</u>til:</div>
<div style="position:absolute;left:969.3px;top:382.2px;width:129.4px;height:14.5px;background:#e3e3e3;border:1px solid #c4c4c4;box-sizing:border-box"></div>
<div class="t" style="left:971.7px;top:386.07px;font-size:8.3px;line-height:8.3px;color:#1a1a1a;font-weight:400;transform:scaleX(0.9515);transform-origin:0 0">Johann Sebastian Bach II</div>
<svg style="position:absolute;left:1089px;top:388px" width="7" height="5" viewBox="0 0 7 5"><path d="M0.5 0.8 L3.5 3.8 L6.5 0.8" fill="none" stroke="#555" stroke-width="0.9"/></svg>
<div class="t" style="left:849.7px;top:405.17px;font-size:8.3px;line-height:8.3px;color:#1a1a1a;font-weight:400;transform:scaleX(1.0175);transform-origin:0 0">Harmonisierungs<u>r</u>hythmus:</div>
<div style="position:absolute;left:969.3px;top:401.2px;width:129.4px;height:14.8px;background:#e3e3e3;border:1px solid #c4c4c4;box-sizing:border-box"></div>
<svg style="position:absolute;left:973px;top:403px" width="6" height="11" viewBox="0 0 6 11"><ellipse cx="2.6" cy="8.8" rx="2.3" ry="1.6" fill="#111" transform="rotate(-25 2.6 8.8)"/><path d="M4.6 8.5 V0.5" stroke="#111" stroke-width="0.9"/></svg>
<div class="t" style="left:985.5px;top:405.47px;font-size:8.3px;line-height:8.3px;color:#1a1a1a;font-weight:400;transform:scaleX(0.9925);transform-origin:0 0">Viertel</div>
<svg style="position:absolute;left:1089px;top:407px" width="7" height="5" viewBox="0 0 7 5"><path d="M0.5 0.8 L3.5 3.8 L6.5 0.8" fill="none" stroke="#555" stroke-width="0.9"/></svg>
<div style="position:absolute;left:849.5px;top:422.7px;width:9.4px;height:9.4px;box-sizing:border-box;border:1.1px solid #707070;border-radius:1px;background:#fff"></div>
<div class="t" style="left:862.3px;top:423.37px;font-size:8.3px;line-height:8.3px;color:#1a1a1a;font-weight:400;transform:scaleX(0.9689);transform-origin:0 0">bevorzuge enge <u>L</u>age</div>
<div style="position:absolute;left:849.5px;top:440.2px;width:9.4px;height:9.4px;box-sizing:border-box;border:1.1px solid #707070;border-radius:1px;background:#fff"></div>
<div class="t" style="left:862.3px;top:440.87px;font-size:8.3px;line-height:8.3px;color:#1a1a1a;font-weight:400;transform:scaleX(0.9776);transform-origin:0 0">Kadenzen <u>z</u>ufällig auswählen</div>
<div style="position:absolute;left:849.5px;top:457.6px;width:9.4px;height:9.4px;box-sizing:border-box;border:1.1px solid #707070;border-radius:1px;background:#fff"></div>
<div class="t" style="left:862.3px;top:458.27px;font-size:8.3px;line-height:8.3px;color:#1a1a1a;font-weight:400;transform:scaleX(1.0023);transform-origin:0 0">neu <u>h</u>armonisieren</div>
<div style="position:absolute;left:849.5px;top:475.1px;width:9.4px;height:9.4px;box-sizing:border-box;border:1.1px solid #707070;border-radius:1px;background:#fff"></div>
<div class="t" style="left:862.3px;top:475.77px;font-size:8.3px;line-height:8.3px;color:#1a1a1a;font-weight:400;transform:scaleX(1.0133);transform-origin:0 0">eingetragene <u>M</u>odulationen berücksichtigen</div>
<div style="position:absolute;left:849.5px;top:492.5px;width:9.4px;height:9.4px;box-sizing:border-box;border:1.1px solid #707070;border-radius:1px;background:#fff"></div>
<div class="t" style="left:862.3px;top:493.17px;font-size:8.3px;line-height:8.3px;color:#1a1a1a;font-weight:400;transform:scaleX(0.9882);transform-origin:0 0">schnelle Berechnung</div>
<svg style="position:absolute;left:969.2px;top:491.6px" width="10" height="10" viewBox="-5 -5 10 10"><circle r="5" fill="#111"/><circle cx="0.2" cy="-2.6" r="0.95" fill="#fff"/><path d="M-1.2 -1 H0.9 V2.6 H1.5 V3.4 H-1.4 V2.6 H-0.6 V-0.2 H-1.2 Z" fill="#fff"/></svg>
<div style="position:absolute;left:843px;top:523.7px;width:262px;height:15.7px;background:#d9d9d9"></div>
<div class="t" style="left:851.7px;top:527.87px;font-size:8.3px;line-height:8.3px;height:10.790000000000001px;color:#1a1a1a;font-weight:700;font-family:"Liberation Sans", sans-serif;">Begleitmuster</div>
<svg style="position:absolute;left:1091.7px;top:528.3px" width="9.3" height="5.2" viewBox="0 0 9.3 5.2"><path d="M0 0 H9.3 L4.65 5.2 Z" fill="#111"/></svg>
<div style="position:absolute;left:1083.7px;top:554.3px;width:2.4px;height:2.4px;border-radius:50%;background:#111"></div>
<div style="position:absolute;left:1087.3px;top:554.3px;width:2.4px;height:2.4px;border-radius:50%;background:#111"></div>
<div style="position:absolute;left:1090.9px;top:554.3px;width:2.4px;height:2.4px;border-radius:50%;background:#111"></div>
<div style="position:absolute;left:6.5px;top:565px;width:14.6px;height:14.6px;border-radius:50%;background:#fff"></div>
<svg style="position:absolute;left:9px;top:568px" width="9" height="9" viewBox="0 0 9 9"><path d="M2 1.5 V7.5" stroke="#60a066" stroke-width="0.9"/><path d="M7.2 1.2 V7.8 L2.8 4.5 Z" fill="#60a066"/></svg>
<div style="position:absolute;left:36px;top:564.2px;width:17px;height:17px;border-radius:50%;background:#fff"></div>
<svg style="position:absolute;left:41px;top:568px" width="8" height="9" viewBox="0 0 8 9"><path d="M1.5 1 V8 L7 4.5 Z" fill="#60a066"/></svg>
<div style="position:absolute;left:66.5px;top:566.3px;width:17px;height:12.6px;border-radius:6.3px;background:#fff"></div>
<div class="t" style="left:68.3px;top:571.15px;font-size:6.2px;line-height:6.2px;height:8.06px;color:#60a066;font-weight:700;font-family:"Liberation Sans", sans-serif;">Solo</div>
<svg style="position:absolute;left:97px;top:564px" width="18" height="16" viewBox="0 0 18 16"><path d="M8 2 H16 M10 5 H16 M11 8 H16 M11 11 H16 M11 14 H16" stroke="#dfeee0" stroke-width="0.8"/><circle cx="7.5" cy="10.5" r="5.2" fill="#fff"/><path d="M4.8 9.2 H6.3 L8.3 7.3 V13.7 L6.3 11.8 H4.8 Z" fill="#60a066"/><path d="M9.5 9 V12 M10.8 8.3 V12.7" stroke="#60a066" stroke-width="0.6"/></svg>
<svg style="position:absolute;left:120px;top:570px" width="6" height="4" viewBox="0 0 6 4"><path d="M0 0 H6 L3 4 Z" fill="#fff"/></svg>
<div style="position:absolute;left:144px;top:572px;width:811px;height:2.6px;background:#a7cda9;border-radius:1px"></div>
<div style="position:absolute;left:129.2px;top:565.1px;width:15px;height:15px;border-radius:50%;background:#fff"></div>
<div class="t" style="left:959.7px;top:569.36px;font-size:10.8px;line-height:10.8px;color:#eef5ee;font-weight:400;transform:scaleX(0.9993);transform-origin:0 0">0:00 / 0:17</div>
<svg style="position:absolute;left:1020px;top:564px" width="19" height="17" viewBox="0 0 19 17"><g transform="translate(13 5.5)"><rect x="-1.1" y="-5.2" width="2.2" height="2.6" fill="#fff" transform="rotate(0)"/><rect x="-1.1" y="-5.2" width="2.2" height="2.6" fill="#fff" transform="rotate(45)"/><rect x="-1.1" y="-5.2" width="2.2" height="2.6" fill="#fff" transform="rotate(90)"/><rect x="-1.1" y="-5.2" width="2.2" height="2.6" fill="#fff" transform="rotate(135)"/><rect x="-1.1" y="-5.2" width="2.2" height="2.6" fill="#fff" transform="rotate(180)"/><rect x="-1.1" y="-5.2" width="2.2" height="2.6" fill="#fff" transform="rotate(225)"/><rect x="-1.1" y="-5.2" width="2.2" height="2.6" fill="#fff" transform="rotate(270)"/><rect x="-1.1" y="-5.2" width="2.2" height="2.6" fill="#fff" transform="rotate(315)"/><circle r="3.8" fill="#fff"/></g><circle cx="7.5" cy="10" r="6.3" fill="#fff" stroke="#60a066" stroke-width="0.8"/><path d="M4.3 8.7 H6 L8.3 6.5 V13.5 L6 11.3 H4.3 Z" fill="#60a066"/><path d="M9.8 8.5 V11.5 M11.2 7.8 V12.2" stroke="#60a066" stroke-width="0.7"/></svg>
<svg style="position:absolute;left:1042.8px;top:572px" width="6" height="4" viewBox="0 0 6 4"><path d="M0 0 H6 L3 4 Z" fill="#fff"/></svg>
<svg style="position:absolute;left:1057px;top:565px" width="15" height="16" viewBox="0 0 15 16"><path d="M1.5 5.5 H4 L8 2 V13 L4 9.5 H1.5 Z" fill="#fff"/><path d="M11.5 1 Q13 2.5 11.5 4 Q10 5.5 11.5 7 Q13 8.5 11.5 10 Q10 11.5 11.5 13 Q12.5 14 12 15" fill="none" stroke="#fff" stroke-width="1.25"/></svg>
<svg style="position:absolute;left:1090px;top:565px" width="13" height="15" viewBox="0 0 13 15"><path d="M4.5 0.8 H8.5 L12.2 14.2 H0.8 Z" fill="#fff"/><path d="M4 11 L9.5 2.5" stroke="#60a066" stroke-width="1"/><path d="M3.2 11.5 H9.8" stroke="#60a066" stroke-width="0.9"/></svg>
<svg style="position:absolute;left:1110.5px;top:572px" width="6" height="4" viewBox="0 0 6 4"><path d="M0 0 H6 L3 4 Z" fill="#fff"/></svg>
<svg style="position:absolute;left:202px;top:191px" width="458" height="368" viewBox="202 191 458 368"><rect x="245.6" y="195.5" width="370.7" height="380" fill="none" stroke="#cfcfcf" stroke-width="1"/><rect x="246" y="195.5" width="5.3" height="5.5" fill="#b4b4b4"/><rect x="428.5" y="195.5" width="5.3" height="5.5" fill="#b4b4b4"/><rect x="611" y="195.5" width="5.3" height="5.5" fill="#b4b4b4"/><text x="297.6" y="214" font-family="Liberation Serif" font-size="10.4" font-weight="400" fill="#111" >Pattern Rock I</text><line x1="298.25" y1="246.75" x2="616.3" y2="246.75" stroke="#ababab" stroke-width="1"/><line x1="298.25" y1="250.67" x2="616.3" y2="250.67" stroke="#ababab" stroke-width="1"/><line x1="298.25" y1="254.59" x2="616.3" y2="254.59" stroke="#ababab" stroke-width="1"/><line x1="298.25" y1="258.51" x2="616.3" y2="258.51" stroke="#ababab" stroke-width="1"/><line x1="298.25" y1="262.43" x2="616.3" y2="262.43" stroke="#ababab" stroke-width="1"/><line x1="298.25" y1="286.10" x2="616.3" y2="286.10" stroke="#ababab" stroke-width="1"/><line x1="298.25" y1="290.02" x2="616.3" y2="290.02" stroke="#ababab" stroke-width="1"/><line x1="298.25" y1="293.94" x2="616.3" y2="293.94" stroke="#ababab" stroke-width="1"/><line x1="298.25" y1="297.86" x2="616.3" y2="297.86" stroke="#ababab" stroke-width="1"/><line x1="298.25" y1="301.78" x2="616.3" y2="301.78" stroke="#ababab" stroke-width="1"/><line x1="298.25" y1="332.70" x2="616.3" y2="332.70" stroke="#ababab" stroke-width="1"/><line x1="298.25" y1="336.70" x2="616.3" y2="336.70" stroke="#ababab" stroke-width="1"/><line x1="298.25" y1="340.70" x2="616.3" y2="340.70" stroke="#ababab" stroke-width="1"/><line x1="298.25" y1="344.70" x2="616.3" y2="344.70" stroke="#ababab" stroke-width="1"/><line x1="298.25" y1="348.70" x2="616.3" y2="348.70" stroke="#ababab" stroke-width="1"/><line x1="298.25" y1="246.75" x2="298.25" y2="348.7" stroke="#6a6a6a" stroke-width="0.9"/><line x1="616.3" y1="246.75" x2="616.3" y2="348.7" stroke="#6a6a6a" stroke-width="0.9"/><line x1="420.8" y1="286.1" x2="420.8" y2="348.7" stroke="#6a6a6a" stroke-width="0.9"/><line x1="523.9" y1="286.1" x2="523.9" y2="348.7" stroke="#6a6a6a" stroke-width="0.9"/><g transform="translate(301 241.75) scale(1.000)"><path d="M5.8 18.6 C3.8 18.6 3.6 15.2 6.2 14.8 C8.8 14.5 10 17.2 8.8 19.2 C7.5 21.2 3.2 21.5 1.3 18.8 C-0.5 16 1.2 12.5 4 10 C6.5 7.8 8.3 5.8 8 3 C7.8 1 7 0.3 6.3 0.3 C5.3 0.3 4.3 2.5 4.5 5 C4.7 8 6.5 19 6.8 23 C7 25.2 6 26 4.6 26 C3.4 26 2.6 25.2 2.8 24.4" fill="none" stroke="#111" stroke-width="1.6"/><circle cx="4" cy="24.2" r="2" fill="#111"/></g><g transform="translate(301 281.1) scale(1.000)"><path d="M5.8 18.6 C3.8 18.6 3.6 15.2 6.2 14.8 C8.8 14.5 10 17.2 8.8 19.2 C7.5 21.2 3.2 21.5 1.3 18.8 C-0.5 16 1.2 12.5 4 10 C6.5 7.8 8.3 5.8 8 3 C7.8 1 7 0.3 6.3 0.3 C5.3 0.3 4.3 2.5 4.5 5 C4.7 8 6.5 19 6.8 23 C7 25.2 6 26 4.6 26 C3.4 26 2.6 25.2 2.8 24.4" fill="none" stroke="#111" stroke-width="1.6"/><circle cx="4" cy="24.2" r="2" fill="#111"/></g><g transform="translate(301 333.0)"><path d="M0.5 3.8 C0.8 0.8 3.5 0 5 0.2 C7.8 0.6 8.6 3 8.3 5.2 C7.9 8.5 4.5 11.5 0.5 13 L0.3 12.5 C3.6 10.6 6.1 8 6.2 5 C6.3 2.5 5.3 0.9 4 0.9 C2.8 0.9 1.8 1.6 1.5 2.6 Z" fill="#111"/><circle cx="2.5" cy="3.9" r="2" fill="#111"/><circle cx="10.4" cy="2.2" r="1" fill="#111"/><circle cx="10.4" cy="5.6" r="1" fill="#111"/></g><text x="0" y="0" font-family="Liberation Serif" font-size="11.2" font-weight="700" fill="#111" stroke="#111" stroke-width="0.45" transform="translate(316 254.59) scale(0.88 1)">4</text><text x="0" y="0" font-family="Liberation Serif" font-size="11.2" font-weight="700" fill="#111" stroke="#111" stroke-width="0.45" transform="translate(316 262.43) scale(0.88 1)">4</text><text x="0" y="0" font-family="Liberation Serif" font-size="11.2" font-weight="700" fill="#111" stroke="#111" stroke-width="0.45" transform="translate(316 293.94) scale(0.88 1)">4</text><text x="0" y="0" font-family="Liberation Serif" font-size="11.2" font-weight="700" fill="#111" stroke="#111" stroke-width="0.45" transform="translate(316 301.78) scale(0.88 1)">4</text><text x="0" y="0" font-family="Liberation Serif" font-size="11.2" font-weight="700" fill="#111" stroke="#111" stroke-width="0.45" transform="translate(316 340.70) scale(0.88 1)">4</text><text x="0" y="0" font-family="Liberation Serif" font-size="11.2" font-weight="700" fill="#111" stroke="#111" stroke-width="0.45" transform="translate(316 348.70) scale(0.88 1)">4</text><rect x="327.8" y="242.7" width="1.3" height="23.3" fill="#222"/><path transform="translate(292.2 286.1)" d="M5 0 C1.8 3 2.4 12.52 2.4 19.41 C2.4 26.60 1.8 29.73 0 31.30 C1.8 32.86 2.4 35.99 2.4 43.19 C2.4 50.08 1.8 59.60 5 62.60 L5.3 62.20 C3.8 59.60 4 50.08 4 43.19 C4 35.99 3.4 32.55 1.2 31.30 C3.4 30.05 4 26.60 4 19.41 C4 12.52 3.8 3 5.3 0.4 Z" fill="#111"/><text x="252.3" y="257.4" font-family="Liberation Serif" font-size="9.2" font-weight="400" fill="#111" >Melodie</text><text x="247.3" y="319.8" font-family="Liberation Serif" font-size="9.2" font-weight="400" fill="#111" >Begleitung</text><line x1="332.30" y1="305.80" x2="340.30" y2="305.80" stroke="#b8b8b8" stroke-width="0.8"/><line x1="332.30" y1="309.70" x2="340.30" y2="309.70" stroke="#b8b8b8" stroke-width="0.8"/><ellipse cx="336.30" cy="301.40" rx="2.75" ry="1.95" transform="rotate(-22 336.30 301.40)" fill="#111"/><ellipse cx="336.30" cy="305.30" rx="2.75" ry="1.95" transform="rotate(-22 336.30 305.30)" fill="#111"/><ellipse cx="336.30" cy="311.40" rx="2.75" ry="1.95" transform="rotate(-22 336.30 311.40)" fill="#111"/><line x1="338.60" y1="311.40" x2="338.60" y2="287.70" stroke="#333" stroke-width="0.8"/><line x1="350.20" y1="305.80" x2="358.20" y2="305.80" stroke="#b8b8b8" stroke-width="0.8"/><ellipse cx="354.20" cy="297.60" rx="2.75" ry="1.95" transform="rotate(-22 354.20 297.60)" fill="#111"/><ellipse cx="354.20" cy="301.50" rx="2.75" ry="1.95" transform="rotate(-22 354.20 301.50)" fill="#111"/><ellipse cx="354.20" cy="305.40" rx="2.75" ry="1.95" transform="rotate(-22 354.20 305.40)" fill="#111"/><line x1="356.50" y1="305.40" x2="356.50" y2="286.10" stroke="#333" stroke-width="0.8"/><circle cx="359.00" cy="296.00" r="0.75" fill="#111"/><circle cx="359.00" cy="299.90" r="0.75" fill="#111"/><circle cx="359.00" cy="303.80" r="0.75" fill="#111"/><line x1="365.80" y1="305.80" x2="373.80" y2="305.80" stroke="#b8b8b8" stroke-width="0.8"/><ellipse cx="369.80" cy="297.60" rx="2.75" ry="1.95" transform="rotate(-22 369.80 297.60)" fill="#111"/><ellipse cx="369.80" cy="301.50" rx="2.75" ry="1.95" transform="rotate(-22 369.80 301.50)" fill="#111"/><ellipse cx="369.80" cy="305.40" rx="2.75" ry="1.95" transform="rotate(-22 369.80 305.40)" fill="#111"/><line x1="372.10" y1="305.40" x2="372.10" y2="286.10" stroke="#333" stroke-width="0.8"/><polygon points="356.50,286.10 372.10,286.10 372.10,288.05 356.50,288.05" fill="#111"/><polygon points="368.10,289.50 372.10,289.50 372.10,291.00 368.10,291.00" fill="#111"/><line x1="374.50" y1="305.80" x2="382.50" y2="305.80" stroke="#b8b8b8" stroke-width="0.8"/><line x1="374.50" y1="309.70" x2="382.50" y2="309.70" stroke="#b8b8b8" stroke-width="0.8"/><ellipse cx="378.50" cy="301.40" rx="2.75" ry="1.95" transform="rotate(-22 378.50 301.40)" fill="#111"/><ellipse cx="378.50" cy="305.30" rx="2.75" ry="1.95" transform="rotate(-22 378.50 305.30)" fill="#111"/><ellipse cx="378.50" cy="311.40" rx="2.75" ry="1.95" transform="rotate(-22 378.50 311.40)" fill="#111"/><line x1="380.80" y1="311.40" x2="380.80" y2="287.70" stroke="#333" stroke-width="0.8"/><line x1="392.30" y1="305.80" x2="400.30" y2="305.80" stroke="#b8b8b8" stroke-width="0.8"/><line x1="392.30" y1="309.70" x2="400.30" y2="309.70" stroke="#b8b8b8" stroke-width="0.8"/><ellipse cx="396.30" cy="301.40" rx="2.75" ry="1.95" transform="rotate(-22 396.30 301.40)" fill="#111"/><ellipse cx="396.30" cy="305.30" rx="2.75" ry="1.95" transform="rotate(-22 396.30 305.30)" fill="#111"/><ellipse cx="396.30" cy="311.40" rx="2.75" ry="1.95" transform="rotate(-22 396.30 311.40)" fill="#111"/><line x1="398.60" y1="311.40" x2="398.60" y2="290.00" stroke="#333" stroke-width="0.8"/><circle cx="401.10" cy="299.80" r="0.75" fill="#111"/><circle cx="401.10" cy="303.70" r="0.75" fill="#111"/><circle cx="401.10" cy="309.80" r="0.75" fill="#111"/><line x1="407.60" y1="305.80" x2="415.60" y2="305.80" stroke="#b8b8b8" stroke-width="0.8"/><line x1="407.60" y1="309.70" x2="415.60" y2="309.70" stroke="#b8b8b8" stroke-width="0.8"/><ellipse cx="411.60" cy="301.40" rx="2.75" ry="1.95" transform="rotate(-22 411.60 301.40)" fill="#111"/><ellipse cx="411.60" cy="305.30" rx="2.75" ry="1.95" transform="rotate(-22 411.60 305.30)" fill="#111"/><ellipse cx="411.60" cy="311.40" rx="2.75" ry="1.95" transform="rotate(-22 411.60 311.40)" fill="#111"/><line x1="413.90" y1="311.40" x2="413.90" y2="290.00" stroke="#333" stroke-width="0.8"/><polygon points="398.60,290.00 413.90,290.00 413.90,291.95 398.60,291.95" fill="#111"/><polygon points="409.90,293.30 413.90,293.30 413.90,294.80 409.90,294.80" fill="#111"/><line x1="425.20" y1="305.80" x2="433.20" y2="305.80" stroke="#b8b8b8" stroke-width="0.8"/><line x1="425.20" y1="309.70" x2="433.20" y2="309.70" stroke="#b8b8b8" stroke-width="0.8"/><ellipse cx="429.20" cy="299.80" rx="2.75" ry="1.95" transform="rotate(-22 429.20 299.80)" fill="#111"/><ellipse cx="429.20" cy="303.60" rx="2.75" ry="1.95" transform="rotate(-22 429.20 303.60)" fill="#111"/><ellipse cx="429.20" cy="309.40" rx="2.75" ry="1.95" transform="rotate(-22 429.20 309.40)" fill="#111"/><line x1="431.50" y1="309.40" x2="431.50" y2="286.10" stroke="#333" stroke-width="0.8"/><line x1="442.50" y1="305.80" x2="450.50" y2="305.80" stroke="#b8b8b8" stroke-width="0.8"/><line x1="442.50" y1="309.70" x2="450.50" y2="309.70" stroke="#b8b8b8" stroke-width="0.8"/><ellipse cx="446.50" cy="299.80" rx="2.75" ry="1.95" transform="rotate(-22 446.50 299.80)" fill="#111"/><ellipse cx="446.50" cy="303.60" rx="2.75" ry="1.95" transform="rotate(-22 446.50 303.60)" fill="#111"/><ellipse cx="446.50" cy="309.40" rx="2.75" ry="1.95" transform="rotate(-22 446.50 309.40)" fill="#111"/><line x1="448.80" y1="309.40" x2="448.80" y2="286.10" stroke="#333" stroke-width="0.8"/><circle cx="451.30" cy="298.20" r="0.75" fill="#111"/><circle cx="451.30" cy="302.00" r="0.75" fill="#111"/><circle cx="451.30" cy="307.80" r="0.75" fill="#111"/><line x1="457.80" y1="305.80" x2="465.80" y2="305.80" stroke="#b8b8b8" stroke-width="0.8"/><line x1="457.80" y1="309.70" x2="465.80" y2="309.70" stroke="#b8b8b8" stroke-width="0.8"/><ellipse cx="461.80" cy="299.80" rx="2.75" ry="1.95" transform="rotate(-22 461.80 299.80)" fill="#111"/><ellipse cx="461.80" cy="303.60" rx="2.75" ry="1.95" transform="rotate(-22 461.80 303.60)" fill="#111"/><ellipse cx="461.80" cy="309.40" rx="2.75" ry="1.95" transform="rotate(-22 461.80 309.40)" fill="#111"/><line x1="464.10" y1="309.40" x2="464.10" y2="286.10" stroke="#333" stroke-width="0.8"/><polygon points="448.80,286.10 464.10,286.10 464.10,288.05 448.80,288.05" fill="#111"/><polygon points="460.10,289.50 464.10,289.50 464.10,291.00 460.10,291.00" fill="#111"/><line x1="466.90" y1="305.80" x2="474.90" y2="305.80" stroke="#b8b8b8" stroke-width="0.8"/><line x1="466.90" y1="309.70" x2="474.90" y2="309.70" stroke="#b8b8b8" stroke-width="0.8"/><ellipse cx="470.90" cy="299.80" rx="2.75" ry="1.95" transform="rotate(-22 470.90 299.80)" fill="#111"/><ellipse cx="470.90" cy="303.60" rx="2.75" ry="1.95" transform="rotate(-22 470.90 303.60)" fill="#111"/><ellipse cx="470.90" cy="309.40" rx="2.75" ry="1.95" transform="rotate(-22 470.90 309.40)" fill="#111"/><line x1="473.20" y1="309.40" x2="473.20" y2="286.10" stroke="#333" stroke-width="0.8"/><line x1="484.70" y1="305.80" x2="492.70" y2="305.80" stroke="#b8b8b8" stroke-width="0.8"/><line x1="484.70" y1="309.70" x2="492.70" y2="309.70" stroke="#b8b8b8" stroke-width="0.8"/><ellipse cx="488.70" cy="299.80" rx="2.75" ry="1.95" transform="rotate(-22 488.70 299.80)" fill="#111"/><ellipse cx="488.70" cy="303.60" rx="2.75" ry="1.95" transform="rotate(-22 488.70 303.60)" fill="#111"/><ellipse cx="488.70" cy="309.40" rx="2.75" ry="1.95" transform="rotate(-22 488.70 309.40)" fill="#111"/><line x1="491.00" y1="309.40" x2="491.00" y2="286.10" stroke="#333" stroke-width="0.8"/><line x1="527.60" y1="305.80" x2="535.60" y2="305.80" stroke="#b8b8b8" stroke-width="0.8"/><ellipse cx="531.60" cy="303.50" rx="2.75" ry="1.95" transform="rotate(-22 531.60 303.50)" fill="#111"/><ellipse cx="531.60" cy="307.30" rx="2.75" ry="1.95" transform="rotate(-22 531.60 307.30)" fill="#111"/><line x1="533.90" y1="307.30" x2="533.90" y2="289.50" stroke="#333" stroke-width="0.8"/><line x1="545.50" y1="305.80" x2="553.50" y2="305.80" stroke="#b8b8b8" stroke-width="0.8"/><ellipse cx="549.50" cy="303.50" rx="2.75" ry="1.95" transform="rotate(-22 549.50 303.50)" fill="#111"/><ellipse cx="549.50" cy="307.30" rx="2.75" ry="1.95" transform="rotate(-22 549.50 307.30)" fill="#111"/><line x1="551.80" y1="307.30" x2="551.80" y2="290.00" stroke="#333" stroke-width="0.8"/><circle cx="554.30" cy="301.90" r="0.75" fill="#111"/><circle cx="554.30" cy="305.70" r="0.75" fill="#111"/><line x1="561.00" y1="305.80" x2="569.00" y2="305.80" stroke="#b8b8b8" stroke-width="0.8"/><ellipse cx="565.00" cy="303.50" rx="2.75" ry="1.95" transform="rotate(-22 565.00 303.50)" fill="#111"/><ellipse cx="565.00" cy="307.30" rx="2.75" ry="1.95" transform="rotate(-22 565.00 307.30)" fill="#111"/><line x1="567.30" y1="307.30" x2="567.30" y2="290.00" stroke="#333" stroke-width="0.8"/><polygon points="551.80,290.00 567.30,290.00 567.30,291.95 551.80,291.95" fill="#111"/><polygon points="563.30,293.30 567.30,293.30 567.30,294.80 563.30,294.80" fill="#111"/><line x1="569.50" y1="305.80" x2="577.50" y2="305.80" stroke="#b8b8b8" stroke-width="0.8"/><ellipse cx="573.50" cy="299.60" rx="2.75" ry="1.95" transform="rotate(-22 573.50 299.60)" fill="#111"/><ellipse cx="573.50" cy="303.50" rx="2.75" ry="1.95" transform="rotate(-22 573.50 303.50)" fill="#111"/><ellipse cx="573.50" cy="307.30" rx="2.75" ry="1.95" transform="rotate(-22 573.50 307.30)" fill="#111"/><line x1="575.80" y1="307.30" x2="575.80" y2="286.10" stroke="#333" stroke-width="0.8"/><line x1="587.50" y1="305.80" x2="595.50" y2="305.80" stroke="#b8b8b8" stroke-width="0.8"/><ellipse cx="591.50" cy="299.60" rx="2.75" ry="1.95" transform="rotate(-22 591.50 299.60)" fill="#111"/><ellipse cx="591.50" cy="303.50" rx="2.75" ry="1.95" transform="rotate(-22 591.50 303.50)" fill="#111"/><ellipse cx="591.50" cy="307.30" rx="2.75" ry="1.95" transform="rotate(-22 591.50 307.30)" fill="#111"/><line x1="593.80" y1="307.30" x2="593.80" y2="286.10" stroke="#333" stroke-width="0.8"/><circle cx="596.30" cy="298.00" r="0.75" fill="#111"/><circle cx="596.30" cy="301.90" r="0.75" fill="#111"/><circle cx="596.30" cy="305.70" r="0.75" fill="#111"/><line x1="602.80" y1="305.80" x2="610.80" y2="305.80" stroke="#b8b8b8" stroke-width="0.8"/><ellipse cx="606.80" cy="299.60" rx="2.75" ry="1.95" transform="rotate(-22 606.80 299.60)" fill="#111"/><ellipse cx="606.80" cy="303.50" rx="2.75" ry="1.95" transform="rotate(-22 606.80 303.50)" fill="#111"/><ellipse cx="606.80" cy="307.30" rx="2.75" ry="1.95" transform="rotate(-22 606.80 307.30)" fill="#111"/><line x1="609.10" y1="307.30" x2="609.10" y2="286.10" stroke="#333" stroke-width="0.8"/><polygon points="593.80,286.10 609.10,286.10 609.10,288.05 593.80,288.05" fill="#111"/><polygon points="605.10,289.50 609.10,289.50 609.10,291.00 605.10,291.00" fill="#111"/><ellipse cx="336.40" cy="342.70" rx="2.75" ry="1.95" transform="rotate(-22 336.40 342.70)" fill="#111"/><line x1="334.20" y1="342.70" x2="334.20" y2="353.80" stroke="#333" stroke-width="0.8"/><path d="M334.20 353.80 C337.20 350.80 338.00 347.30 335.70 344.00" fill="none" stroke="#111" stroke-width="1.15"/><ellipse cx="348.10" cy="328.90" rx="2.75" ry="1.95" transform="rotate(-22 348.10 328.90)" fill="#111"/><line x1="345.90" y1="328.90" x2="345.90" y2="342.10" stroke="#333" stroke-width="0.8"/><ellipse cx="363.40" cy="328.90" rx="2.75" ry="1.95" transform="rotate(-22 363.40 328.90)" fill="#111"/><line x1="361.20" y1="328.90" x2="361.20" y2="349.50" stroke="#333" stroke-width="0.8"/><ellipse cx="379.00" cy="342.70" rx="2.75" ry="1.95" transform="rotate(-22 379.00 342.70)" fill="#111"/><line x1="376.80" y1="342.70" x2="376.80" y2="354.90" stroke="#333" stroke-width="0.8"/><polygon points="361.20,347.80 376.80,353.20 376.80,355.15 361.20,349.75" fill="#111"/><ellipse cx="390.50" cy="342.70" rx="2.75" ry="1.95" transform="rotate(-22 390.50 342.70)" fill="#111"/><line x1="388.30" y1="342.70" x2="388.30" y2="354.70" stroke="#333" stroke-width="0.8"/><ellipse cx="406.10" cy="328.90" rx="2.75" ry="1.95" transform="rotate(-22 406.10 328.90)" fill="#111"/><line x1="403.90" y1="328.90" x2="403.90" y2="342.40" stroke="#333" stroke-width="0.8"/><path d="M403.90 342.40 C406.90 339.40 407.70 335.90 405.40 332.60" fill="none" stroke="#111" stroke-width="1.15"/><ellipse cx="429.20" cy="336.60" rx="2.75" ry="1.95" transform="rotate(-22 429.20 336.60)" fill="#111"/><line x1="427.00" y1="336.60" x2="427.00" y2="350.50" stroke="#333" stroke-width="0.8"/><path d="M427.00 350.50 C430.00 347.50 430.80 344.00 428.50 340.70" fill="none" stroke="#111" stroke-width="1.15"/><ellipse cx="441.00" cy="336.60" rx="2.75" ry="1.95" transform="rotate(-22 441.00 336.60)" fill="#111"/><line x1="438.80" y1="336.60" x2="438.80" y2="349.40" stroke="#333" stroke-width="0.8"/><ellipse cx="456.10" cy="336.60" rx="2.75" ry="1.95" transform="rotate(-22 456.10 336.60)" fill="#111"/><line x1="453.90" y1="336.60" x2="453.90" y2="352.79" stroke="#333" stroke-width="0.8"/><ellipse cx="470.90" cy="336.60" rx="2.75" ry="1.95" transform="rotate(-22 470.90 336.60)" fill="#111"/><line x1="468.70" y1="336.60" x2="468.70" y2="354.14" stroke="#333" stroke-width="0.8"/><ellipse cx="482.60" cy="336.60" rx="2.75" ry="1.95" transform="rotate(-22 482.60 336.60)" fill="#111"/><line x1="480.40" y1="336.60" x2="480.40" y2="355.21" stroke="#333" stroke-width="0.8"/><ellipse cx="496.70" cy="341.00" rx="2.75" ry="1.95" transform="rotate(-22 496.70 341.00)" fill="#111"/><line x1="494.50" y1="341.00" x2="494.50" y2="356.50" stroke="#333" stroke-width="0.8"/><ellipse cx="505.20" cy="343.00" rx="2.75" ry="1.95" transform="rotate(-22 505.20 343.00)" fill="#111"/><line x1="503.00" y1="343.00" x2="503.00" y2="357.28" stroke="#333" stroke-width="0.8"/><ellipse cx="514.00" cy="346.60" rx="2.75" ry="1.95" transform="rotate(-22 514.00 346.60)" fill="#111"/><line x1="511.80" y1="346.60" x2="511.80" y2="358.08" stroke="#333" stroke-width="0.8"/><circle cx="488.00" cy="338.80" r="0.75" fill="#111"/><polygon points="454.00,351.80 512.00,357.10 512.00,359.05 454.00,353.75" fill="#111"/><polygon points="494.50,352.20 512.00,353.80 512.00,355.30 494.50,353.70" fill="#111"/><ellipse cx="531.90" cy="334.60" rx="2.75" ry="1.95" transform="rotate(-22 531.90 334.60)" fill="#111"/><line x1="529.70" y1="334.60" x2="529.70" y2="348.20" stroke="#333" stroke-width="0.8"/><path d="M529.70 348.20 C532.70 345.20 533.50 341.70 531.20 338.40" fill="none" stroke="#111" stroke-width="1.15"/><ellipse cx="543.50" cy="334.60" rx="2.75" ry="1.95" transform="rotate(-22 543.50 334.60)" fill="#111"/><line x1="541.30" y1="334.60" x2="541.30" y2="348.20" stroke="#333" stroke-width="0.8"/><ellipse cx="558.90" cy="334.60" rx="2.75" ry="1.95" transform="rotate(-22 558.90 334.60)" fill="#111"/><line x1="556.70" y1="334.60" x2="556.70" y2="348.40" stroke="#333" stroke-width="0.8"/><ellipse cx="573.40" cy="334.60" rx="2.75" ry="1.95" transform="rotate(-22 573.40 334.60)" fill="#111"/><line x1="571.20" y1="334.60" x2="571.20" y2="348.40" stroke="#333" stroke-width="0.8"/><polygon points="556.70,347.00 571.20,347.00 571.20,348.95 556.70,348.95" fill="#111"/><ellipse cx="585.30" cy="348.60" rx="2.75" ry="1.95" transform="rotate(-22 585.30 348.60)" fill="#111"/><line x1="583.10" y1="348.60" x2="583.10" y2="358.30" stroke="#333" stroke-width="0.8"/><ellipse cx="600.80" cy="334.60" rx="2.75" ry="1.95" transform="rotate(-22 600.80 334.60)" fill="#111"/><line x1="598.60" y1="334.60" x2="598.60" y2="348.00" stroke="#333" stroke-width="0.8"/><path d="M598.60 348.00 C601.60 345.00 602.40 341.50 600.10 338.20" fill="none" stroke="#111" stroke-width="1.15"/><text x="333.8" y="372.6" font-family="Liberation Sans" font-size="10" fill="#222" letter-spacing="-0.35">C/E</text><text x="376.6" y="372.6" font-family="Liberation Sans" font-size="10" fill="#222" letter-spacing="-0.35">C/E</text><text x="426.6" y="372.6" font-family="Liberation Sans" font-size="10" fill="#222" letter-spacing="-0.35">F<tspan font-size="6.2" dy="-3.8">6</tspan></text><text x="469.2" y="372.6" font-family="Liberation Sans" font-size="10" fill="#222" letter-spacing="-0.35">F<tspan font-size="6.2" dy="-3.8">6</tspan></text><text x="529.7" y="372.6" font-family="Liberation Sans" font-size="10" fill="#222" letter-spacing="-0.35">G<tspan font-size="6.2" dy="-3.8">7</tspan><tspan dy="3.8">/D</tspan></text><text x="571.7" y="372.6" font-family="Liberation Sans" font-size="10" fill="#222" letter-spacing="-0.35">G<tspan font-size="6.2" dy="-3.8">7</tspan></text><line x1="277.25" y1="419.30" x2="616.3" y2="419.30" stroke="#ababab" stroke-width="1"/><line x1="277.25" y1="423.20" x2="616.3" y2="423.20" stroke="#ababab" stroke-width="1"/><line x1="277.25" y1="427.10" x2="616.3" y2="427.10" stroke="#ababab" stroke-width="1"/><line x1="277.25" y1="431.00" x2="616.3" y2="431.00" stroke="#ababab" stroke-width="1"/><line x1="277.25" y1="434.90" x2="616.3" y2="434.90" stroke="#ababab" stroke-width="1"/><line x1="277.25" y1="458.30" x2="616.3" y2="458.30" stroke="#ababab" stroke-width="1"/><line x1="277.25" y1="462.32" x2="616.3" y2="462.32" stroke="#ababab" stroke-width="1"/><line x1="277.25" y1="466.34" x2="616.3" y2="466.34" stroke="#ababab" stroke-width="1"/><line x1="277.25" y1="470.36" x2="616.3" y2="470.36" stroke="#ababab" stroke-width="1"/><line x1="277.25" y1="474.38" x2="616.3" y2="474.38" stroke="#ababab" stroke-width="1"/><line x1="277.25" y1="505.60" x2="616.3" y2="505.60" stroke="#ababab" stroke-width="1"/><line x1="277.25" y1="509.50" x2="616.3" y2="509.50" stroke="#ababab" stroke-width="1"/><line x1="277.25" y1="513.40" x2="616.3" y2="513.40" stroke="#ababab" stroke-width="1"/><line x1="277.25" y1="517.30" x2="616.3" y2="517.30" stroke="#ababab" stroke-width="1"/><line x1="277.25" y1="521.20" x2="616.3" y2="521.20" stroke="#ababab" stroke-width="1"/><line x1="277.25" y1="419.3" x2="277.25" y2="521.2" stroke="#6a6a6a" stroke-width="0.9"/><line x1="616.3" y1="419.3" x2="616.3" y2="521.2" stroke="#6a6a6a" stroke-width="0.9"/><line x1="403.6" y1="419.3" x2="403.6" y2="521.2" stroke="#6a6a6a" stroke-width="0.9"/><line x1="505.9" y1="419.3" x2="505.9" y2="521.2" stroke="#6a6a6a" stroke-width="0.9"/><g transform="translate(279.3 414.3) scale(0.995)"><path d="M5.8 18.6 C3.8 18.6 3.6 15.2 6.2 14.8 C8.8 14.5 10 17.2 8.8 19.2 C7.5 21.2 3.2 21.5 1.3 18.8 C-0.5 16 1.2 12.5 4 10 C6.5 7.8 8.3 5.8 8 3 C7.8 1 7 0.3 6.3 0.3 C5.3 0.3 4.3 2.5 4.5 5 C4.7 8 6.5 19 6.8 23 C7 25.2 6 26 4.6 26 C3.4 26 2.6 25.2 2.8 24.4" fill="none" stroke="#111" stroke-width="1.6"/><circle cx="4" cy="24.2" r="2" fill="#111"/></g><g transform="translate(279.5 453.3) scale(1.020)"><path d="M5.8 18.6 C3.8 18.6 3.6 15.2 6.2 14.8 C8.8 14.5 10 17.2 8.8 19.2 C7.5 21.2 3.2 21.5 1.3 18.8 C-0.5 16 1.2 12.5 4 10 C6.5 7.8 8.3 5.8 8 3 C7.8 1 7 0.3 6.3 0.3 C5.3 0.3 4.3 2.5 4.5 5 C4.7 8 6.5 19 6.8 23 C7 25.2 6 26 4.6 26 C3.4 26 2.6 25.2 2.8 24.4" fill="none" stroke="#111" stroke-width="1.6"/><circle cx="4" cy="24.2" r="2" fill="#111"/></g><g transform="translate(279.5 505.90000000000003)"><path d="M0.5 3.8 C0.8 0.8 3.5 0 5 0.2 C7.8 0.6 8.6 3 8.3 5.2 C7.9 8.5 4.5 11.5 0.5 13 L0.3 12.5 C3.6 10.6 6.1 8 6.2 5 C6.3 2.5 5.3 0.9 4 0.9 C2.8 0.9 1.8 1.6 1.5 2.6 Z" fill="#111"/><circle cx="2.5" cy="3.9" r="2" fill="#111"/><circle cx="10.4" cy="2.2" r="1" fill="#111"/><circle cx="10.4" cy="5.6" r="1" fill="#111"/></g><text x="280.4" y="413.5" font-family="Liberation Serif" font-size="7.2" font-weight="400" fill="#111" >4</text><path transform="translate(271.2 458.3)" d="M5 0 C1.8 3 2.4 12.58 2.4 19.50 C2.4 26.73 1.8 29.88 0 31.45 C1.8 33.02 2.4 36.17 2.4 43.40 C2.4 50.32 1.8 59.90 5 62.90 L5.3 62.50 C3.8 59.90 4 50.32 4 43.40 C4 36.17 3.4 32.71 1.2 31.45 C3.4 30.19 4 26.73 4 19.50 C4 12.58 3.8 3 5.3 0.4 Z" fill="#111"/><text x="251.7" y="429.3" font-family="Liberation Serif" font-size="9.2" font-weight="400" fill="#111" >M.</text><text x="247.3" y="492.6" font-family="Liberation Serif" font-size="9.2" font-weight="400" fill="#111" >Begl.</text><rect x="342.59999999999997" y="423.2" width="5.2" height="2" fill="#111"/><rect x="451.7" y="423.2" width="5.2" height="2" fill="#111"/><rect x="558.1" y="423.2" width="5.2" height="2" fill="#111"/><line x1="297.60" y1="478.50" x2="305.60" y2="478.50" stroke="#b8b8b8" stroke-width="0.8"/><ellipse cx="301.60" cy="470.40" rx="2.75" ry="1.95" transform="rotate(-22 301.60 470.40)" fill="#111"/><ellipse cx="301.60" cy="474.50" rx="2.75" ry="1.95" transform="rotate(-22 301.60 474.50)" fill="#111"/><ellipse cx="301.60" cy="482.00" rx="2.75" ry="1.95" transform="rotate(-22 301.60 482.00)" fill="#111"/><line x1="303.90" y1="482.00" x2="303.90" y2="456.20" stroke="#333" stroke-width="0.8"/><line x1="316.80" y1="478.50" x2="324.80" y2="478.50" stroke="#b8b8b8" stroke-width="0.8"/><ellipse cx="320.80" cy="468.40" rx="2.75" ry="1.95" transform="rotate(-22 320.80 468.40)" fill="#111"/><ellipse cx="320.80" cy="474.30" rx="2.75" ry="1.95" transform="rotate(-22 320.80 474.30)" fill="#111"/><ellipse cx="320.80" cy="478.30" rx="2.75" ry="1.95" transform="rotate(-22 320.80 478.30)" fill="#111"/><line x1="323.10" y1="478.30" x2="323.10" y2="455.30" stroke="#333" stroke-width="0.8"/><circle cx="325.60" cy="466.80" r="0.75" fill="#111"/><circle cx="325.60" cy="472.70" r="0.75" fill="#111"/><circle cx="325.60" cy="476.70" r="0.75" fill="#111"/><line x1="333.30" y1="478.50" x2="341.30" y2="478.50" stroke="#b8b8b8" stroke-width="0.8"/><ellipse cx="337.30" cy="468.40" rx="2.75" ry="1.95" transform="rotate(-22 337.30 468.40)" fill="#111"/><ellipse cx="337.30" cy="474.30" rx="2.75" ry="1.95" transform="rotate(-22 337.30 474.30)" fill="#111"/><ellipse cx="337.30" cy="478.30" rx="2.75" ry="1.95" transform="rotate(-22 337.30 478.30)" fill="#111"/><line x1="339.60" y1="478.30" x2="339.60" y2="455.30" stroke="#333" stroke-width="0.8"/><polygon points="323.10,455.30 339.60,455.30 339.60,457.25 323.10,457.25" fill="#111"/><polygon points="335.60,458.80 339.60,458.80 339.60,460.30 335.60,460.30" fill="#111"/><line x1="342.60" y1="478.50" x2="350.60" y2="478.50" stroke="#b8b8b8" stroke-width="0.8"/><ellipse cx="346.60" cy="470.40" rx="2.75" ry="1.95" transform="rotate(-22 346.60 470.40)" fill="#111"/><ellipse cx="346.60" cy="474.50" rx="2.75" ry="1.95" transform="rotate(-22 346.60 474.50)" fill="#111"/><ellipse cx="346.60" cy="482.00" rx="2.75" ry="1.95" transform="rotate(-22 346.60 482.00)" fill="#111"/><line x1="348.90" y1="482.00" x2="348.90" y2="456.20" stroke="#333" stroke-width="0.8"/><line x1="361.50" y1="478.50" x2="369.50" y2="478.50" stroke="#b8b8b8" stroke-width="0.8"/><ellipse cx="365.50" cy="470.40" rx="2.75" ry="1.95" transform="rotate(-22 365.50 470.40)" fill="#111"/><ellipse cx="365.50" cy="474.50" rx="2.75" ry="1.95" transform="rotate(-22 365.50 474.50)" fill="#111"/><ellipse cx="365.50" cy="482.00" rx="2.75" ry="1.95" transform="rotate(-22 365.50 482.00)" fill="#111"/><line x1="367.80" y1="482.00" x2="367.80" y2="456.20" stroke="#333" stroke-width="0.8"/><path d="M407.30 469.50 V478.00 M409.30 469.00 V477.50 M406.10 472.70 L410.50 471.50 M406.10 475.50 L410.50 474.30" stroke="#111" stroke-width="0.8"/><line x1="409.80" y1="478.50" x2="417.80" y2="478.50" stroke="#b8b8b8" stroke-width="0.8"/><ellipse cx="413.80" cy="471.60" rx="2.75" ry="1.95" transform="rotate(-22 413.80 471.60)" fill="#111"/><ellipse cx="413.80" cy="476.00" rx="2.75" ry="1.95" transform="rotate(-22 413.80 476.00)" fill="#111"/><ellipse cx="413.80" cy="481.80" rx="2.75" ry="1.95" transform="rotate(-22 413.80 481.80)" fill="#111"/><line x1="416.10" y1="481.80" x2="416.10" y2="458.30" stroke="#333" stroke-width="0.8"/><line x1="428.40" y1="478.50" x2="436.40" y2="478.50" stroke="#b8b8b8" stroke-width="0.8"/><ellipse cx="432.40" cy="471.60" rx="2.75" ry="1.95" transform="rotate(-22 432.40 471.60)" fill="#111"/><ellipse cx="432.40" cy="476.00" rx="2.75" ry="1.95" transform="rotate(-22 432.40 476.00)" fill="#111"/><ellipse cx="432.40" cy="481.80" rx="2.75" ry="1.95" transform="rotate(-22 432.40 481.80)" fill="#111"/><line x1="434.70" y1="481.80" x2="434.70" y2="458.60" stroke="#333" stroke-width="0.8"/><circle cx="437.20" cy="470.00" r="0.75" fill="#111"/><circle cx="437.20" cy="474.40" r="0.75" fill="#111"/><circle cx="437.20" cy="480.20" r="0.75" fill="#111"/><line x1="444.60" y1="478.50" x2="452.60" y2="478.50" stroke="#b8b8b8" stroke-width="0.8"/><ellipse cx="448.60" cy="471.60" rx="2.75" ry="1.95" transform="rotate(-22 448.60 471.60)" fill="#111"/><ellipse cx="448.60" cy="476.00" rx="2.75" ry="1.95" transform="rotate(-22 448.60 476.00)" fill="#111"/><ellipse cx="448.60" cy="481.80" rx="2.75" ry="1.95" transform="rotate(-22 448.60 481.80)" fill="#111"/><line x1="450.90" y1="481.80" x2="450.90" y2="458.60" stroke="#333" stroke-width="0.8"/><polygon points="434.70,458.60 450.90,458.60 450.90,460.55 434.70,460.55" fill="#111"/><polygon points="446.90,462.30 450.90,462.30 450.90,463.80 446.90,463.80" fill="#111"/><path d="M454.50 474.50 V483.00 M456.50 474.00 V482.50 M453.30 477.70 L457.70 476.50 M453.30 480.50 L457.70 479.30" stroke="#111" stroke-width="0.8"/><line x1="456.70" y1="478.50" x2="464.70" y2="478.50" stroke="#b8b8b8" stroke-width="0.8"/><ellipse cx="460.70" cy="474.00" rx="2.75" ry="1.95" transform="rotate(-22 460.70 474.00)" fill="#111"/><ellipse cx="460.70" cy="477.90" rx="2.75" ry="1.95" transform="rotate(-22 460.70 477.90)" fill="#111"/><ellipse cx="460.70" cy="481.80" rx="2.75" ry="1.95" transform="rotate(-22 460.70 481.80)" fill="#111"/><line x1="463.00" y1="481.80" x2="463.00" y2="460.40" stroke="#333" stroke-width="0.8"/><line x1="475.30" y1="478.50" x2="483.30" y2="478.50" stroke="#b8b8b8" stroke-width="0.8"/><ellipse cx="479.30" cy="474.00" rx="2.75" ry="1.95" transform="rotate(-22 479.30 474.00)" fill="#111"/><ellipse cx="479.30" cy="477.90" rx="2.75" ry="1.95" transform="rotate(-22 479.30 477.90)" fill="#111"/><ellipse cx="479.30" cy="481.80" rx="2.75" ry="1.95" transform="rotate(-22 479.30 481.80)" fill="#111"/><line x1="481.60" y1="481.80" x2="481.60" y2="462.50" stroke="#333" stroke-width="0.8"/><circle cx="484.10" cy="472.40" r="0.75" fill="#111"/><circle cx="484.10" cy="476.30" r="0.75" fill="#111"/><circle cx="484.10" cy="480.20" r="0.75" fill="#111"/><line x1="492.40" y1="478.50" x2="500.40" y2="478.50" stroke="#b8b8b8" stroke-width="0.8"/><ellipse cx="496.40" cy="474.00" rx="2.75" ry="1.95" transform="rotate(-22 496.40 474.00)" fill="#111"/><ellipse cx="496.40" cy="477.90" rx="2.75" ry="1.95" transform="rotate(-22 496.40 477.90)" fill="#111"/><ellipse cx="496.40" cy="481.80" rx="2.75" ry="1.95" transform="rotate(-22 496.40 481.80)" fill="#111"/><line x1="498.70" y1="481.80" x2="498.70" y2="462.50" stroke="#333" stroke-width="0.8"/><polygon points="481.60,462.50 498.70,462.50 498.70,464.45 481.60,464.45" fill="#111"/><polygon points="494.70,466.00 498.70,466.00 498.70,467.50 494.70,467.50" fill="#111"/><line x1="510.60" y1="478.50" x2="518.60" y2="478.50" stroke="#b8b8b8" stroke-width="0.8"/><line x1="510.60" y1="482.50" x2="518.60" y2="482.50" stroke="#b8b8b8" stroke-width="0.8"/><ellipse cx="514.60" cy="473.80" rx="2.75" ry="1.95" transform="rotate(-22 514.60 473.80)" fill="#111"/><ellipse cx="514.60" cy="477.80" rx="2.75" ry="1.95" transform="rotate(-22 514.60 477.80)" fill="#111"/><ellipse cx="514.60" cy="483.30" rx="2.75" ry="1.95" transform="rotate(-22 514.60 483.30)" fill="#111"/><line x1="516.90" y1="483.30" x2="516.90" y2="460.70" stroke="#333" stroke-width="0.8"/><line x1="529.50" y1="478.50" x2="537.50" y2="478.50" stroke="#b8b8b8" stroke-width="0.8"/><line x1="529.50" y1="482.50" x2="537.50" y2="482.50" stroke="#b8b8b8" stroke-width="0.8"/><ellipse cx="533.50" cy="473.80" rx="2.75" ry="1.95" transform="rotate(-22 533.50 473.80)" fill="#111"/><ellipse cx="533.50" cy="477.80" rx="2.75" ry="1.95" transform="rotate(-22 533.50 477.80)" fill="#111"/><ellipse cx="533.50" cy="483.30" rx="2.75" ry="1.95" transform="rotate(-22 533.50 483.30)" fill="#111"/><line x1="535.80" y1="483.30" x2="535.80" y2="462.60" stroke="#333" stroke-width="0.8"/><circle cx="538.30" cy="472.20" r="0.75" fill="#111"/><circle cx="538.30" cy="476.20" r="0.75" fill="#111"/><circle cx="538.30" cy="481.70" r="0.75" fill="#111"/><line x1="545.70" y1="478.50" x2="553.70" y2="478.50" stroke="#b8b8b8" stroke-width="0.8"/><line x1="545.70" y1="482.50" x2="553.70" y2="482.50" stroke="#b8b8b8" stroke-width="0.8"/><ellipse cx="549.70" cy="473.80" rx="2.75" ry="1.95" transform="rotate(-22 549.70 473.80)" fill="#111"/><ellipse cx="549.70" cy="477.80" rx="2.75" ry="1.95" transform="rotate(-22 549.70 477.80)" fill="#111"/><ellipse cx="549.70" cy="483.30" rx="2.75" ry="1.95" transform="rotate(-22 549.70 483.30)" fill="#111"/><line x1="552.00" y1="483.30" x2="552.00" y2="462.60" stroke="#333" stroke-width="0.8"/><polygon points="535.80,462.60 552.00,462.60 552.00,464.55 535.80,464.55" fill="#111"/><polygon points="548.00,466.00 552.00,466.00 552.00,467.50 548.00,467.50" fill="#111"/><line x1="555.80" y1="478.50" x2="563.80" y2="478.50" stroke="#b8b8b8" stroke-width="0.8"/><line x1="555.80" y1="482.50" x2="563.80" y2="482.50" stroke="#b8b8b8" stroke-width="0.8"/><ellipse cx="559.80" cy="476.20" rx="2.75" ry="1.95" transform="rotate(-22 559.80 476.20)" fill="#111"/><ellipse cx="559.80" cy="480.00" rx="2.75" ry="1.95" transform="rotate(-22 559.80 480.00)" fill="#111"/><ellipse cx="559.80" cy="483.50" rx="2.75" ry="1.95" transform="rotate(-22 559.80 483.50)" fill="#111"/><line x1="562.10" y1="483.50" x2="562.10" y2="462.50" stroke="#333" stroke-width="0.8"/><line x1="574.70" y1="478.50" x2="582.70" y2="478.50" stroke="#b8b8b8" stroke-width="0.8"/><line x1="574.70" y1="482.50" x2="582.70" y2="482.50" stroke="#b8b8b8" stroke-width="0.8"/><ellipse cx="578.70" cy="476.20" rx="2.75" ry="1.95" transform="rotate(-22 578.70 476.20)" fill="#111"/><ellipse cx="578.70" cy="480.00" rx="2.75" ry="1.95" transform="rotate(-22 578.70 480.00)" fill="#111"/><ellipse cx="578.70" cy="483.50" rx="2.75" ry="1.95" transform="rotate(-22 578.70 483.50)" fill="#111"/><line x1="581.00" y1="483.50" x2="581.00" y2="462.50" stroke="#333" stroke-width="0.8"/><ellipse cx="301.40" cy="515.20" rx="2.75" ry="1.95" transform="rotate(-22 301.40 515.20)" fill="#111"/><line x1="299.20" y1="515.20" x2="299.20" y2="526.50" stroke="#333" stroke-width="0.8"/><path d="M299.20 526.50 C302.20 523.50 303.00 520.00 300.70 516.70" fill="none" stroke="#111" stroke-width="1.15"/><ellipse cx="313.70" cy="501.40" rx="2.75" ry="1.95" transform="rotate(-22 313.70 501.40)" fill="#111"/><line x1="311.50" y1="501.40" x2="311.50" y2="514.70" stroke="#333" stroke-width="0.8"/><ellipse cx="330.50" cy="501.40" rx="2.75" ry="1.95" transform="rotate(-22 330.50 501.40)" fill="#111"/><line x1="328.30" y1="501.40" x2="328.30" y2="524.60" stroke="#333" stroke-width="0.8"/><ellipse cx="346.70" cy="515.20" rx="2.75" ry="1.95" transform="rotate(-22 346.70 515.20)" fill="#111"/><line x1="344.50" y1="515.20" x2="344.50" y2="526.72" stroke="#333" stroke-width="0.8"/><ellipse cx="359.50" cy="515.20" rx="2.75" ry="1.95" transform="rotate(-22 359.50 515.20)" fill="#111"/><line x1="357.30" y1="515.20" x2="357.30" y2="528.39" stroke="#333" stroke-width="0.8"/><ellipse cx="373.80" cy="519.80" rx="2.75" ry="1.95" transform="rotate(-22 373.80 519.80)" fill="#111"/><line x1="371.60" y1="519.80" x2="371.60" y2="530.26" stroke="#333" stroke-width="0.8"/><ellipse cx="383.70" cy="520.80" rx="2.75" ry="1.95" transform="rotate(-22 383.70 520.80)" fill="#111"/><line x1="381.50" y1="520.80" x2="381.50" y2="531.55" stroke="#333" stroke-width="0.8"/><ellipse cx="393.50" cy="511.20" rx="2.75" ry="1.95" transform="rotate(-22 393.50 511.20)" fill="#111"/><line x1="391.30" y1="511.20" x2="391.30" y2="532.83" stroke="#333" stroke-width="0.8"/><circle cx="364.50" cy="515.80" r="0.75" fill="#111"/><polygon points="328.30,523.60 391.80,531.90 391.80,533.85 328.30,525.55" fill="#111"/><polygon points="371.60,525.96 391.80,528.60 391.80,530.10 371.60,527.46" fill="#111"/><ellipse cx="413.80" cy="512.90" rx="2.75" ry="1.95" transform="rotate(-22 413.80 512.90)" fill="#111"/><line x1="411.60" y1="512.90" x2="411.60" y2="525.50" stroke="#333" stroke-width="0.8"/><path d="M411.60 525.50 C414.60 522.50 415.40 519.00 413.10 515.70" fill="none" stroke="#111" stroke-width="1.15"/><ellipse cx="426.10" cy="512.90" rx="2.75" ry="1.95" transform="rotate(-22 426.10 512.90)" fill="#111"/><line x1="423.90" y1="512.90" x2="423.90" y2="526.00" stroke="#333" stroke-width="0.8"/><ellipse cx="442.40" cy="512.90" rx="2.75" ry="1.95" transform="rotate(-22 442.40 512.90)" fill="#111"/><line x1="440.20" y1="512.90" x2="440.20" y2="524.50" stroke="#333" stroke-width="0.8"/><ellipse cx="460.60" cy="505.60" rx="2.75" ry="1.95" transform="rotate(-22 460.60 505.60)" fill="#111"/><line x1="458.40" y1="505.60" x2="458.40" y2="521.00" stroke="#333" stroke-width="0.8"/><polygon points="440.20,523.40 458.40,519.90 458.40,521.85 440.20,525.35" fill="#111"/><ellipse cx="472.90" cy="519.40" rx="2.75" ry="1.95" transform="rotate(-22 472.90 519.40)" fill="#111"/><line x1="470.70" y1="519.40" x2="470.70" y2="528.50" stroke="#333" stroke-width="0.8"/><ellipse cx="489.70" cy="505.60" rx="2.75" ry="1.95" transform="rotate(-22 489.70 505.60)" fill="#111"/><line x1="487.50" y1="505.60" x2="487.50" y2="518.60" stroke="#333" stroke-width="0.8"/><path d="M487.50 518.60 C490.50 515.60 491.30 512.10 489.00 508.80" fill="none" stroke="#111" stroke-width="1.15"/><ellipse cx="514.80" cy="515.10" rx="2.75" ry="1.95" transform="rotate(-22 514.80 515.10)" fill="#111"/><line x1="512.60" y1="515.10" x2="512.60" y2="526.00" stroke="#333" stroke-width="0.8"/><path d="M512.60 526.00 C515.60 523.00 516.40 519.50 514.10 516.20" fill="none" stroke="#111" stroke-width="1.15"/><ellipse cx="527.50" cy="501.20" rx="2.75" ry="1.95" transform="rotate(-22 527.50 501.20)" fill="#111"/><line x1="525.30" y1="501.20" x2="525.30" y2="514.60" stroke="#333" stroke-width="0.8"/><ellipse cx="543.60" cy="501.20" rx="2.75" ry="1.95" transform="rotate(-22 543.60 501.20)" fill="#111"/><line x1="541.40" y1="501.20" x2="541.40" y2="521.30" stroke="#333" stroke-width="0.8"/><ellipse cx="559.40" cy="507.40" rx="2.75" ry="1.95" transform="rotate(-22 559.40 507.40)" fill="#111"/><line x1="557.20" y1="507.40" x2="557.20" y2="523.23" stroke="#333" stroke-width="0.8"/><ellipse cx="572.00" cy="507.40" rx="2.75" ry="1.95" transform="rotate(-22 572.00 507.40)" fill="#111"/><line x1="569.80" y1="507.40" x2="569.80" y2="524.77" stroke="#333" stroke-width="0.8"/><ellipse cx="586.90" cy="511.00" rx="2.75" ry="1.95" transform="rotate(-22 586.90 511.00)" fill="#111"/><line x1="584.70" y1="511.00" x2="584.70" y2="526.58" stroke="#333" stroke-width="0.8"/><ellipse cx="596.50" cy="513.10" rx="2.75" ry="1.95" transform="rotate(-22 596.50 513.10)" fill="#111"/><line x1="594.30" y1="513.10" x2="594.30" y2="527.76" stroke="#333" stroke-width="0.8"/><ellipse cx="606.50" cy="517.20" rx="2.75" ry="1.95" transform="rotate(-22 606.50 517.20)" fill="#111"/><line x1="604.30" y1="517.20" x2="604.30" y2="528.98" stroke="#333" stroke-width="0.8"/><circle cx="577.00" cy="508.20" r="0.75" fill="#111"/><polygon points="541.40,520.30 604.50,528.00 604.50,529.95 541.40,522.25" fill="#111"/><polygon points="584.70,522.28 604.50,524.70 604.50,526.20 584.70,523.78" fill="#111"/><text x="299.7" y="544.5" font-family="Liberation Sans" font-size="10" fill="#222" letter-spacing="-0.35">C<tspan font-size="6.2" dy="-3.8">6</tspan></text><text x="345" y="544.5" font-family="Liberation Sans" font-size="10" fill="#222" letter-spacing="-0.35">C<tspan font-size="6.2" dy="-3.8">6</tspan></text><text x="412" y="544.5" font-family="Liberation Sans" font-size="10" fill="#222" letter-spacing="-0.35">D</text><text x="458.7" y="544.5" font-family="Liberation Sans" font-size="10" fill="#222" letter-spacing="-0.35">A</text><text x="513.3" y="544.5" font-family="Liberation Sans" font-size="10" fill="#222" letter-spacing="-0.35">C</text><text x="558" y="544.5" font-family="Liberation Sans" font-size="10" fill="#222" letter-spacing="-0.35">G</text></svg></body></html>
